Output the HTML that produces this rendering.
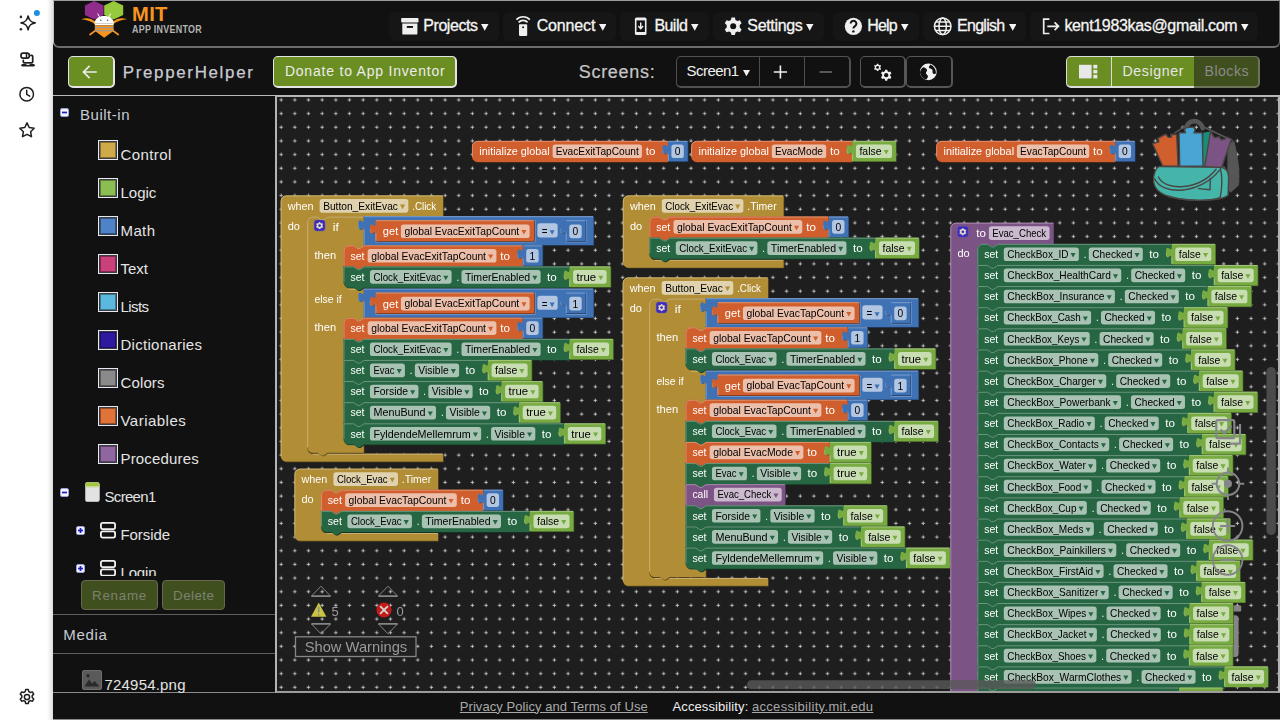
<!DOCTYPE html>
<html lang="en"><head><meta charset="utf-8"><title>MIT App Inventor</title>
<style>
*{box-sizing:border-box}
html,body{margin:0;padding:0}
body{width:1280px;height:720px;overflow:hidden;background:#111111;font-family:'Liberation Sans',sans-serif;position:relative}
.abs{position:absolute}
.t{position:absolute;white-space:pre;line-height:1;display:block}
#rail{position:absolute;left:0;top:0;width:53px;height:720px;background:linear-gradient(to right,#ffffff 0,#ffffff 47px,#f0f0f0 50px,#dedede 53px)}
#topbar{position:absolute;left:53px;top:0;width:1227px;height:48px;background:#111111;border:1px solid #6c6c6c;border-bottom-width:2px;border-top-color:#9a9a9a;border-left-color:#c4c4c4;border-radius:0 0 6px 6px}
.mi{position:absolute;top:11px;height:29px;background:#161616;border-radius:6px}
#toolbar{position:absolute;left:53px;top:48px;width:1227px;height:48px;background:#111111;border-bottom:1px solid #b9b9b9}
.btn{position:absolute;border-radius:4px}
#palette{position:absolute;left:53px;top:96px;width:222px;height:597px;background:#111111;overflow:hidden}
#tree{position:absolute;left:0;top:0;width:223px;height:480px;overflow:hidden}
.cat{position:absolute;left:45px;width:20px;height:20px;border:1px solid #e6e8f4;padding:1px;background:#3c3c3c}
.cat i{display:block;width:16px;height:16px;border:1px solid rgba(0,0,0,.35)}
#ws{position:absolute;left:275px;top:96px;width:1005px;height:597px;background:#1e1e1e;border:1px solid #b4b4b4;border-left-width:2px;border-right-width:2px;border-bottom:2px solid #9c9c9c;overflow:hidden}
#footer{position:absolute;left:53px;top:693px;width:1227px;height:27px;background:#111111;border-bottom:1px solid #8a8a8a}
</style></head>
<body>
<nav id="rail">
<svg class="abs" style="left:0;top:0" width="53" height="720" viewBox="0 0 53 720" fill="none" stroke="#1f1f1f" stroke-width="1.5" stroke-linejoin="round" stroke-linecap="round">
<path d="M28.1 16 C29 20.400 30.600 22 35.100 22.900 C30.600 23.800 29 25.400 28.100 29.800 C27.200 25.400 25.600 23.800 21.100 22.900 C25.600 22 27.200 20.400 28.100 16Z" stroke-width="1.600"/>
<circle cx="20.9" cy="16.9" r="1.300" fill="#2a2a2a" stroke="none"/><circle cx="20.9" cy="29.200" r="1.300" fill="#2a2a2a" stroke="none"/>
<circle cx="36.9" cy="13" r="3" fill="#1a8fe3" stroke="none"/>
<rect x="21" y="53.200" width="8.300" height="4.900" rx="2.200" stroke-width="1.700"/><path d="M26.500 53.500v4.300" stroke-width="1.500"/><path d="M23.300 60.300v1.500a1 1 0 0 0 1 1h7.400a1 1 0 0 0 1-1v-5.400a1 1 0 0 0-1-1h-.8" stroke-width="1.700"/><rect x="21.300" y="63.900" width="13.500" height="2.700" rx="1.300" fill="#1f1f1f" stroke="none"/><rect x="26.400" y="63.900" width="3.200" height="1" fill="#ffffff" stroke="none"/>
<circle cx="26.7" cy="94.2" r="6.8"/><path d="M26.7 90.2v4.2l3 1.8"/>
<path d="M27 122.9l2.2 4.6 5 .7-3.6 3.5.9 5-4.5-2.4-4.5 2.4.9-5-3.6-3.5 5-.7z"/>
<g transform="translate(27 697)"><circle r="2.6"/><path d="M-1.3 -7.4h2.6l.5 2 1.6.9 2-.6 1.3 2.2-1.5 1.5v1.9l1.5 1.5-1.3 2.2-2-.6-1.6.9-.5 2h-2.6l-.5-2-1.6-.9-2 .6-1.3-2.2 1.5-1.5v-1.9l-1.5-1.5 1.3-2.2 2 .6 1.6-.9z"/></g>
</svg>
</nav>
<header id="topbar">
<svg class="abs" style="left:26px;top:-1px" width="60" height="42" viewBox="80 0 60 42">
<polygon points="94.2,1 103.6,5.4 103.6,15 94.2,19.4 84.9,15 84.9,5.4" fill="#8f2c8c"/>
<polygon points="113.7,1 123.2,5.4 123.2,15 113.7,19.4 104.2,15 104.2,5.4" fill="#97c93d"/>
<path d="M81.2 19.3 C86 17.2 91 18.2 95.5 21.5 L95.5 24.5 C91 21 86 19.6 81.2 19.3Z" fill="#f7941e"/>
<path d="M127 19.3 C122.2 17.2 117.2 18.2 112.7 21.5 L112.7 24.5 C117.2 21 122.2 19.6 127 19.3Z" fill="#f7941e"/>
<path d="M95 31 L104.2 37.8 L113.4 31 L113.4 28 L95 28Z" fill="#f7941e"/>
<path d="M89.5 35 L95.5 30.5 M118.8 35 L112.8 30.5" stroke="#f7941e" stroke-width="1.6" fill="none"/>
<path d="M94.6 23.4 C94.6 18.6 98.8 16 104.2 16 C109.6 16 113.8 18.6 113.8 23.4Z" fill="#ffffff"/>
<path d="M99.5 16.8 L97.6 13.6 M108.9 16.8 L110.8 13.6" stroke="#ffffff" stroke-width="1" fill="none"/>
<circle cx="100.8" cy="20.2" r="0.8" fill="#555"/><circle cx="107.6" cy="20.2" r="0.8" fill="#555"/>
<rect x="94.8" y="23.4" width="18.8" height="2" fill="#ffffff"/>
<rect x="94.8" y="25.4" width="18.8" height="1.6" fill="#f7941e"/>
<rect x="94.8" y="27" width="18.8" height="1.5" fill="#9a9a9a"/>
<rect x="94.8" y="28.5" width="18.8" height="1.6" fill="#f7941e"/>
<rect x="94.8" y="30.1" width="18.8" height="1.2" fill="#9a9a9a"/>
</svg>
<div class="mi" style="left:335.3px;width:109.4px"></div>
<svg class="abs" style="left:427.40px;top:22.80px" width="7.50" height="6.80" viewBox="0 0 7.50 6.80"><path d="M0 0h7.50l-3.75 6.80z" fill="#f4f4f4"/></svg>
<div class="mi" style="left:449.0px;width:112.9px"></div>
<svg class="abs" style="left:544.80px;top:22.80px" width="7.50" height="6.80" viewBox="0 0 7.50 6.80"><path d="M0 0h7.50l-3.75 6.80z" fill="#f4f4f4"/></svg>
<div class="mi" style="left:565.8px;width:89.6px"></div>
<svg class="abs" style="left:637.20px;top:22.80px" width="7.50" height="6.80" viewBox="0 0 7.50 6.80"><path d="M0 0h7.50l-3.75 6.80z" fill="#f4f4f4"/></svg>
<div class="mi" style="left:659.3px;width:110.7px"></div>
<svg class="abs" style="left:752.20px;top:22.80px" width="7.50" height="6.80" viewBox="0 0 7.50 6.80"><path d="M0 0h7.50l-3.75 6.80z" fill="#f4f4f4"/></svg>
<div class="mi" style="left:778.8px;width:85.8px"></div>
<svg class="abs" style="left:847.00px;top:22.80px" width="7.50" height="6.80" viewBox="0 0 7.50 6.80"><path d="M0 0h7.50l-3.75 6.80z" fill="#f4f4f4"/></svg>
<div class="mi" style="left:868.6px;width:103.3px"></div>
<svg class="abs" style="left:954.50px;top:22.80px" width="7.50" height="6.80" viewBox="0 0 7.50 6.80"><path d="M0 0h7.50l-3.75 6.80z" fill="#f4f4f4"/></svg>
<div class="mi" style="left:975.9px;width:228.5px"></div>
<svg class="abs" style="left:1187.00px;top:22.80px" width="7.50" height="6.80" viewBox="0 0 7.50 6.80"><path d="M0 0h7.50l-3.75 6.80z" fill="#f4f4f4"/></svg>
<svg class="abs" style="left:336px;top:-1px" width="730" height="47" viewBox="390 0 730 47" fill="#efefef">
<g><rect x="401.2" y="18" width="17.3" height="4.6" rx="0.8"/><path d="M402.3 23.6h15.1v10.1a0.9 0.9 0 0 1-.9.9h-13.3a0.9 0.9 0 0 1-.9-.9z"/><rect x="406.8" y="26" width="6.2" height="1.9" fill="#111"/></g>
<g><rect x="519" y="24.200" width="8.200" height="11.700" rx="0.800"/><circle cx="523.100" cy="27.300" r="1" fill="#111"/><path d="M518.600 22.300a6.200 6.200 0 0 1 9 0M516.400 19.600a9.300 9.300 0 0 1 13.400 0" fill="none" stroke="#efefef" stroke-width="1.700"/></g>
<g><rect x="634.9" y="17.6" width="11.6" height="17.4" rx="1.6"/><rect x="636.5" y="20.4" width="8.4" height="11.6" fill="#111"/><path d="M640.7 22.6v5.4M638.3 26l2.4 2.6 2.4-2.6" fill="none" stroke="#efefef" stroke-width="1.4"/></g>
<g transform="translate(733.2 26.3)"><path d="M-1.7 -8.8h3.4l.6 2.5 1.9 1.1 2.5-.8 1.7 2.9-1.9 1.8v2.6l1.9 1.8-1.7 2.9-2.5-.8-1.9 1.100-.6 2.5h-3.4l-.6-2.5-1.9-1.100-2.5.8-1.700-2.900 1.900-1.800v-2.600l-1.900-1.800 1.700-2.900 2.500.8 1.900-1.100z"/><circle r="3" fill="#111"/></g>
<g><circle cx="853.4" cy="26.3" r="8.6"/><path d="M850.6 23.6a2.9 2.9 0 1 1 4.400 2.500c-1.100.7-1.600 1.200-1.600 2.400" fill="none" stroke="#111" stroke-width="2"/><circle cx="853.4" cy="31.400" r="1.2" fill="#111"/></g>
<g fill="none" stroke="#efefef" stroke-width="1.5"><circle cx="942.7" cy="26.3" r="8.300"/><ellipse cx="942.7" cy="26.3" rx="3.700" ry="8.300"/><path d="M934.400 26.3h16.600M935.600 22.100h14.200M935.600 30.500h14.200"/></g>
<g fill="none" stroke="#efefef" stroke-width="1.700"><path d="M1049.400 19.200h-5.700v14.300h5.700"/><path d="M1047.300 26.300h11M1054.600 22.400l3.900 3.900-3.900 3.900"/></g>
</svg>
<span class="t" style="left:78.10px;top:2.60px;font-size:20.2px;color:#f7941e;font-weight:700;letter-spacing:0.267px;">MIT</span>
<span class="t" style="left:78.10px;top:23.43px;font-size:10.6px;color:#b4b4b4;font-weight:700;letter-spacing:0.342px;transform:scaleX(0.84);transform-origin:0 0;">APP INVENTOR</span>
<span class="t" style="left:369.30px;top:16.56px;font-size:16px;color:#f4f4f4;letter-spacing:-0.442px;-webkit-text-stroke:.3px #f4f4f4;">Projects</span>
<span class="t" style="left:482.70px;top:16.56px;font-size:16px;color:#f4f4f4;letter-spacing:-0.149px;-webkit-text-stroke:.3px #f4f4f4;">Connect</span>
<span class="t" style="left:600.40px;top:16.56px;font-size:16px;color:#f4f4f4;letter-spacing:-0.545px;-webkit-text-stroke:.3px #f4f4f4;">Build</span>
<span class="t" style="left:693.30px;top:16.56px;font-size:16px;color:#f4f4f4;letter-spacing:-0.330px;-webkit-text-stroke:.3px #f4f4f4;">Settings</span>
<span class="t" style="left:813.30px;top:16.56px;font-size:16px;color:#f4f4f4;letter-spacing:-0.869px;-webkit-text-stroke:.3px #f4f4f4;">Help</span>
<span class="t" style="left:903.10px;top:16.56px;font-size:16px;color:#f4f4f4;letter-spacing:-0.747px;-webkit-text-stroke:.3px #f4f4f4;">English</span>
<span class="t" style="left:1010.40px;top:16.56px;font-size:16px;color:#f4f4f4;letter-spacing:-0.335px;-webkit-text-stroke:.3px #f4f4f4;">kent1983kas@gmail.com</span>
</header>
<div id="toolbar">
<div class="btn" style="left:15.0px;top:8.0px;width:47.4px;height:32.4px;background:#6b8e23;border:1px solid #e4e4e4;border-width:1px 2px 2px 1px;border-radius:5px"></div>
<svg class="abs" style="left:28px;top:16px" width="20" height="16" viewBox="81 64 20 16" fill="none" stroke="#ececec" stroke-width="1.700"><path d="M96.800 72h-13M89.600 65.800l-6.100 6.200 6.100 6.200"/></svg>
<div class="btn" style="left:220.0px;top:8.4px;width:184.0px;height:31.4px;background:#6b8e23;border:1px solid #e4e4e4;border-width:1px 2px 2px 1px;border-radius:5px"></div>
<div class="btn" style="left:622.6px;top:8.4px;width:175.0px;height:31.2px;border:1px solid #505050;border-width:1px 2px 2px 1px;border-radius:5px"></div>
<div class="btn" style="left:706.0px;top:8.4px;width:1.0px;height:30.6px;background:#4d4d4d;border-radius:0"></div>
<div class="btn" style="left:751.0px;top:8.4px;width:1.0px;height:30.6px;background:#4d4d4d;border-radius:0"></div>
<svg class="abs" style="left:689.70px;top:22.20px" width="7.00" height="6.30" viewBox="0 0 7.00 6.30"><path d="M0 0h7.00l-3.50 6.30z" fill="#f0f0f0"/></svg>
<svg class="abs" style="left:712px;top:12px" width="80" height="24" viewBox="765 60 80 24" fill="none"><path d="M773.800 72h13.200M780.400 65.400v13.200" stroke="#f0f0f0" stroke-width="1.600"/><path d="M819.500 72h12.500" stroke="#6a6a6a" stroke-width="1.600"/></svg>
<div class="btn" style="left:807.0px;top:8.4px;width:46.4px;height:31.4px;border:1px solid #565656;border-width:1px 2px 2px 1px;border-radius:5px"></div>
<div class="btn" style="left:852.6px;top:8.4px;width:47.4px;height:31.4px;border:1px solid #565656;border-width:1px 2px 2px 1px;border-radius:5px"></div>
<svg class="abs" style="left:815px;top:12px" width="76" height="24" viewBox="868 60 76 24" fill="#f0f0f0">
<g transform="translate(886.200 75.200) scale(0.62)"><path d="M-1.7 -8.8h3.4l.6 2.5 1.9 1.1 2.5-.8 1.7 2.9-1.9 1.8v2.6l1.9 1.8-1.7 2.9-2.5-.8-1.9 1.100-.6 2.5h-3.4l-.6-2.5-1.9-1.100-2.5.8-1.700-2.900 1.900-1.800v-2.600l-1.900-1.800 1.700-2.900 2.500.8 1.900-1.100z"/><circle r="3.400" fill="#111"/></g>
<g transform="translate(877.600 67.400) scale(0.42)"><path d="M-1.7 -8.8h3.4l.6 2.5 1.9 1.1 2.5-.8 1.7 2.9-1.9 1.8v2.6l1.9 1.8-1.7 2.9-2.5-.8-1.9 1.100-.6 2.5h-3.4l-.6-2.5-1.9-1.100-2.5.8-1.700-2.900 1.900-1.800v-2.600l-1.900-1.800 1.700-2.900 2.500.8 1.900-1.100z"/><circle r="3.400" fill="#111"/></g>
<circle cx="928.300" cy="71.900" r="8.400"/>
<path d="M923.200 67.200c1.800.3 3.400 1.200 3.800 2.600.5 1.500-1.300 2.100-1.100 3.500.2 1.300 2 1.500 2 3 0 1.300-.8 2.400-1.600 3.300-3.300-.7-5.800-3.400-6.300-6.800 0-2.200 1.300-4.300 3.200-5.600z" fill="#111"/>
<path d="M930.400 64.600c-.4 1.300-1.700 1.700-1.500 2.900.3 1.300 2.400 1 3.300 2.100.9 1.200-.2 2.800.8 3.800.8.800 2 .6 2.900.2.400-3.600-1.900-7.300-5.500-9z" fill="#111"/>
</svg>
<div class="btn" style="left:1013.2px;top:7.9px;width:45.5px;height:31.9px;background:#6b8e23;border:1px solid #dcdcdc;border-bottom-width:2px;border-radius:5px 0 0 5px"></div>
<div class="btn" style="left:1057.8px;top:7.9px;width:84.5px;height:31.9px;background:#6b8e23;border:1px solid #dcdcdc;border-bottom-width:2px;border-radius:0"></div>
<div class="btn" style="left:1141.2px;top:7.9px;width:65.8px;height:31.7px;background:#3f4f1e;border:1px solid #6c7359;border-left:0;border-width:1px 2px 2px 0;border-radius:0 5px 5px 0"></div>
<svg class="abs" style="left:1023px;top:14px" width="24" height="20" viewBox="1076 62 24 20" fill="#e8e8e8"><rect x="1079" y="64.800" width="12.600" height="13.600"/><rect x="1093.300" y="64.800" width="4" height="3.600"/><rect x="1093.300" y="69.800" width="4" height="3.600"/><rect x="1093.300" y="74.800" width="4" height="3.600"/></svg>
<span class="t" style="left:69.70px;top:16.89px;font-size:16.9px;color:#c9cbd2;letter-spacing:1.695px;-webkit-text-stroke:.25px #c9cbd2;">PrepperHelper</span>
<span class="t" style="left:231.90px;top:16.25px;font-size:14px;color:#ececec;letter-spacing:0.790px;">Donate to App Inventor</span>
<span class="t" style="left:525.75px;top:15.06px;font-size:18px;color:#c6c6c6;letter-spacing:0.693px;-webkit-text-stroke:.2px #c6c6c6;">Screens:</span>
<span class="t" style="left:633.60px;top:15.00px;font-size:15px;color:#f0f0f0;letter-spacing:-0.546px;">Screen1</span>
<span class="t" style="left:1069.50px;top:15.88px;font-size:14.2px;color:#e6e6e6;letter-spacing:0.588px;">Designer</span>
<span class="t" style="left:1151.60px;top:15.88px;font-size:14.2px;color:#8a8a8a;letter-spacing:0.421px;">Blocks</span>
</div>
<aside id="palette">
<div id="tree">
<svg class="abs" style="left:7px;top:12px" width="9" height="9" viewBox="0 0 9 9"><rect x="0.500" y="0.500" width="8" height="8" rx="1.500" fill="#f4f4fb" stroke="#9aa0d8"/><path d="M2 4.500h5" stroke="#1c1cc8" stroke-width="1.700"/></svg>
<div class="cat" style="top:44px"><i style="background:#cfaa4b"></i></div>
<div class="cat" style="top:82px"><i style="background:#8bbd52"></i></div>
<div class="cat" style="top:120px"><i style="background:#4f83c8"></i></div>
<div class="cat" style="top:158px"><i style="background:#c9407a"></i></div>
<div class="cat" style="top:196px"><i style="background:#5bb9e0"></i></div>
<div class="cat" style="top:234px"><i style="background:#2e1a9e"></i></div>
<div class="cat" style="top:272px"><i style="background:#8a8a8a"></i></div>
<div class="cat" style="top:310px"><i style="background:#e0733a"></i></div>
<div class="cat" style="top:348px"><i style="background:#8f66a0"></i></div>
<svg class="abs" style="left:7px;top:392px" width="9" height="9" viewBox="0 0 9 9"><rect x="0.500" y="0.500" width="8" height="8" rx="1.500" fill="#f4f4fb" stroke="#9aa0d8"/><path d="M2 4.500h5" stroke="#1c1cc8" stroke-width="1.700"/></svg>
<svg class="abs" style="left:31.5px;top:386px" width="15" height="20" viewBox="0 0 15 20"><rect x="0.300" y="0.300" width="14.200" height="19.400" rx="2.200" fill="#e2e2e2" stroke="#c4c4c4" stroke-width=".6"/><path d="M0.600 2.500a2 2 0 0 1 2-2h9.600a2 2 0 0 1 2 2v1.700h-13.600z" fill="#a4c639"/><rect x="0.600" y="4.200" width="13.600" height="1.200" fill="#c5d88a"/></svg>
<svg class="abs" style="left:23.25px;top:430px" width="9" height="9" viewBox="0 0 9 9"><rect x="0.500" y="0.500" width="8" height="8" rx="1.500" fill="#f4f4fb" stroke="#9aa0d8"/><path d="M2 4.500h5" stroke="#1c1cc8" stroke-width="1.700"/><path d="M4.500 2v5" stroke="#1c1cc8" stroke-width="1.700"/></svg>
<svg class="abs" style="left:47.3px;top:426.20000000000005px" width="16" height="17" viewBox="0 0 16 17" fill="none" stroke="#f2f2f2" stroke-width="1.800"><rect x="0.900" y="0.900" width="14.200" height="6.200" rx="1.800"/><rect x="0.900" y="9.400" width="14.200" height="6.200" rx="1.800"/></svg>
<svg class="abs" style="left:23.25px;top:467.6px" width="9" height="9" viewBox="0 0 9 9"><rect x="0.500" y="0.500" width="8" height="8" rx="1.500" fill="#f4f4fb" stroke="#9aa0d8"/><path d="M2 4.500h5" stroke="#1c1cc8" stroke-width="1.700"/><path d="M4.500 2v5" stroke="#1c1cc8" stroke-width="1.700"/></svg>
<svg class="abs" style="left:47.3px;top:464.4px" width="16" height="17" viewBox="0 0 16 17" fill="none" stroke="#f2f2f2" stroke-width="1.800"><rect x="0.900" y="0.900" width="14.200" height="6.200" rx="1.800"/><rect x="0.900" y="9.400" width="14.200" height="6.200" rx="1.800"/></svg>
<span class="t" style="left:27.00px;top:11.30px;font-size:15px;color:#c9cbd2;letter-spacing:0.520px;">Built-in</span>
<span class="t" style="left:67.50px;top:51.30px;font-size:15px;color:#e4e4e4;letter-spacing:0.398px;">Control</span>
<span class="t" style="left:67.50px;top:89.30px;font-size:15px;color:#e4e4e4;letter-spacing:-0.027px;">Logic</span>
<span class="t" style="left:67.50px;top:127.30px;font-size:15px;color:#e4e4e4;letter-spacing:0.380px;">Math</span>
<span class="t" style="left:67.50px;top:165.30px;font-size:15px;color:#e4e4e4;letter-spacing:-0.005px;">Text</span>
<span class="t" style="left:67.50px;top:203.30px;font-size:15px;color:#e4e4e4;letter-spacing:-0.586px;">Lists</span>
<span class="t" style="left:67.50px;top:241.30px;font-size:15px;color:#e4e4e4;letter-spacing:0.284px;">Dictionaries</span>
<span class="t" style="left:67.50px;top:279.30px;font-size:15px;color:#e4e4e4;letter-spacing:0.128px;">Colors</span>
<span class="t" style="left:67.50px;top:317.30px;font-size:15px;color:#e4e4e4;letter-spacing:0.479px;">Variables</span>
<span class="t" style="left:67.50px;top:355.30px;font-size:15px;color:#e4e4e4;letter-spacing:0.170px;">Procedures</span>
<span class="t" style="left:51.50px;top:393.30px;font-size:15px;color:#e4e4e4;letter-spacing:-0.688px;">Screen1</span>
<span class="t" style="left:67.50px;top:431.30px;font-size:15px;color:#e4e4e4;letter-spacing:-0.089px;">Forside</span>
<span class="t" style="left:67.50px;top:469.30px;font-size:15px;color:#e4e4e4;letter-spacing:-0.176px;">Login</span>
</div>
<div class="btn" style="left:28.2px;top:484.0px;width:76.8px;height:29.5px;background:#3f4f1e;border:1px solid #66694f;border-radius:4px"></div>
<div class="btn" style="left:109.0px;top:484.0px;width:63.0px;height:29.5px;background:#3f4f1e;border:1px solid #66694f;border-radius:4px"></div>
<div class="abs" style="left:0;top:518px;width:223px;height:1px;background:#5f5f5f"></div>
<div class="abs" style="left:0;top:557px;width:223px;height:1px;background:#5f5f5f"></div>
<svg class="abs" style="left:29px;top:574px" width="20" height="20" viewBox="0 0 20 20"><rect x="0.500" y="0.500" width="19" height="19" rx="1.500" fill="#5a5a5a" stroke="#6e6e6e"/><path d="M2.500 16.500l4.500-7 3.200 4.200 2.300-2.700 5 5.500z" fill="#2a2a2a"/><circle cx="6" cy="5.800" r="1.700" fill="#2a2a2a"/></svg>
<div class="abs" style="left:0;top:596px;width:223px;height:1px;background:#8a8a8a"></div>
<span class="t" style="left:39.00px;top:492.66px;font-size:13.4px;color:#7d8270;letter-spacing:0.725px;">Rename</span>
<span class="t" style="left:120.00px;top:492.66px;font-size:13.4px;color:#7d8270;letter-spacing:0.456px;">Delete</span>
<span class="t" style="left:10.25px;top:531.30px;font-size:15px;color:#c9cbd2;letter-spacing:0.660px;">Media</span>
<span class="t" style="left:51.50px;top:581.30px;font-size:15px;color:#e4e4e4;letter-spacing:0.194px;">724954.png</span>
</aside>
<main id="ws">
<svg class="abs" style="left:0;top:0;will-change:transform" width="1001" height="595" viewBox="277 97 1001 595" font-family="'Liberation Sans', sans-serif" font-size="10.02">
<defs><pattern id="grid" x="273.99" y="92.73" width="13.66" height="13.66" patternUnits="userSpaceOnUse"><line x1="5.422" y1="7.172" x2="8.922" y2="7.172" stroke="#d4d4d4" stroke-width="0.85"/><line x1="7.172" y1="5.422" x2="7.172" y2="8.922" stroke="#d4d4d4" stroke-width="0.85"/></pattern></defs>
<rect x="277" y="97" width="1001" height="595" fill="url(#grid)"/>
<g fill="#858585"><rect x="1211" y="615.200" width="27.600" height="41.800" rx="3.500"/><rect x="1208" y="605.400" width="33.200" height="6" rx="1"/></g>
<path d="M477.50 140.90H667.99V161.90H477.50a5.5,5.5 0 0 1 -5.5,-5.5V146.40a5.5,5.5 0 0 1 5.5,-5.5z" fill="#723419" transform="translate(0.7 0.7)"/>
<path d="M477.50 140.90H667.99V161.90H477.50a5.5,5.5 0 0 1 -5.5,-5.5V146.40a5.5,5.5 0 0 1 5.5,-5.5z" fill="#d05f2d"/>
<path d="M667.59 141.30H477.50a5.1,5.1 0 0 0 -5.1,5.1V156.40" stroke="#df9270" stroke-width="1" fill="none"/>
<text x="479.30" y="155.10" fill="#ffffff" textLength="70.48" lengthAdjust="spacingAndGlyphs">initialize global</text>
<rect x="552.60" y="144.40" width="89.39" height="13.7" rx="2.7" fill="#ecbfab"/>
<text x="555.75" y="155.10" fill="#000000" textLength="83.09" lengthAdjust="spacingAndGlyphs">EvacExitTapCount</text>
<text x="645.79" y="155.10" fill="#ffffff" textLength="9.69" lengthAdjust="spacingAndGlyphs">to</text>
<path d="M667.99 140.90H687.73V161.30H667.99V154.50c0,-6.83 -5.46,5.46 -5.46,-5.12s5.46,1.71 5.46,-5.12v-3.4z" fill="#233e64" transform="translate(0.7 0.7)"/>
<path d="M667.99 140.90H687.73V161.30H667.99V154.50c0,-6.83 -5.46,5.46 -5.46,-5.12s5.46,1.71 5.46,-5.12v-3.4z" fill="#3f71b5"/>
<path d="M687.33 141.30H668.39" stroke="#7c9ecd" stroke-width="1" fill="none"/>
<path d="M668.39 154.50V160.90" stroke="#7c9ecd" stroke-width="1" fill="none"/>
<path d="M668.19 154.50c0,-6.83 -5.46,5.46 -5.46,-5.12" stroke="#7c9ecd" stroke-width="0.7" fill="none" opacity=".8"/>
<rect x="671.39" y="144.40" width="12.43" height="13.7" rx="2.7" fill="#b2c6e1"/>
<text x="674.74" y="155.10" fill="#000000" textLength="5.73" lengthAdjust="spacingAndGlyphs">0</text>
<path d="M696.70 140.90H852.15V161.90H696.70a5.5,5.5 0 0 1 -5.5,-5.5V146.40a5.5,5.5 0 0 1 5.5,-5.5z" fill="#723419" transform="translate(0.7 0.7)"/>
<path d="M696.70 140.90H852.15V161.90H696.70a5.5,5.5 0 0 1 -5.5,-5.5V146.40a5.5,5.5 0 0 1 5.5,-5.5z" fill="#d05f2d"/>
<path d="M851.75 141.30H696.70a5.1,5.1 0 0 0 -5.1,5.1V156.40" stroke="#df9270" stroke-width="1" fill="none"/>
<text x="698.50" y="155.10" fill="#ffffff" textLength="70.48" lengthAdjust="spacingAndGlyphs">initialize global</text>
<rect x="771.80" y="144.40" width="54.35" height="13.7" rx="2.7" fill="#ecbfab"/>
<text x="774.95" y="155.10" fill="#000000" textLength="48.05" lengthAdjust="spacingAndGlyphs">EvacMode</text>
<text x="829.95" y="155.10" fill="#ffffff" textLength="9.69" lengthAdjust="spacingAndGlyphs">to</text>
<path d="M852.15 140.90H895.96V161.30H852.15V154.50c0,-6.83 -5.46,5.46 -5.46,-5.12s5.46,1.71 5.46,-5.12v-3.4z" fill="#415e24" transform="translate(0.7 0.7)"/>
<path d="M852.15 140.90H895.96V161.30H852.15V154.50c0,-6.83 -5.46,5.46 -5.46,-5.12s5.46,1.71 5.46,-5.12v-3.4z" fill="#77ab41"/>
<path d="M895.56 141.30H852.55" stroke="#a3c67e" stroke-width="1" fill="none"/>
<path d="M852.55 154.50V160.90" stroke="#a3c67e" stroke-width="1" fill="none"/>
<path d="M852.35 154.50c0,-6.83 -5.46,5.46 -5.46,-5.12" stroke="#a3c67e" stroke-width="0.7" fill="none" opacity=".8"/>
<rect x="855.95" y="144.40" width="36.01" height="13.7" rx="2.7" fill="#c9ddb3"/>
<text x="859.45" y="155.10" fill="#000000" textLength="22.11" lengthAdjust="spacingAndGlyphs">false</text>
<path d="M883.66 150.00h5.1l-2.55 4.6z" fill="#77ab41"/>
<path d="M941.80 140.90H1115.22V161.90H941.80a5.5,5.5 0 0 1 -5.5,-5.5V146.40a5.5,5.5 0 0 1 5.5,-5.5z" fill="#723419" transform="translate(0.7 0.7)"/>
<path d="M941.80 140.90H1115.22V161.90H941.80a5.5,5.5 0 0 1 -5.5,-5.5V146.40a5.5,5.5 0 0 1 5.5,-5.5z" fill="#d05f2d"/>
<path d="M1114.82 141.30H941.80a5.1,5.1 0 0 0 -5.1,5.1V156.40" stroke="#df9270" stroke-width="1" fill="none"/>
<text x="943.60" y="155.10" fill="#ffffff" textLength="70.48" lengthAdjust="spacingAndGlyphs">initialize global</text>
<rect x="1016.90" y="144.40" width="72.32" height="13.7" rx="2.7" fill="#ecbfab"/>
<text x="1020.05" y="155.10" fill="#000000" textLength="66.02" lengthAdjust="spacingAndGlyphs">EvacTapCount</text>
<text x="1093.02" y="155.10" fill="#ffffff" textLength="9.69" lengthAdjust="spacingAndGlyphs">to</text>
<path d="M1115.22 140.90H1134.95V161.30H1115.22V154.50c0,-6.83 -5.46,5.46 -5.46,-5.12s5.46,1.71 5.46,-5.12v-3.4z" fill="#233e64" transform="translate(0.7 0.7)"/>
<path d="M1115.22 140.90H1134.95V161.30H1115.22V154.50c0,-6.83 -5.46,5.46 -5.46,-5.12s5.46,1.71 5.46,-5.12v-3.4z" fill="#3f71b5"/>
<path d="M1134.55 141.30H1115.62" stroke="#7c9ecd" stroke-width="1" fill="none"/>
<path d="M1115.62 154.50V160.90" stroke="#7c9ecd" stroke-width="1" fill="none"/>
<path d="M1115.42 154.50c0,-6.83 -5.46,5.46 -5.46,-5.12" stroke="#7c9ecd" stroke-width="0.7" fill="none" opacity=".8"/>
<rect x="1118.62" y="144.40" width="12.43" height="13.7" rx="2.7" fill="#b2c6e1"/>
<text x="1121.97" y="155.10" fill="#000000" textLength="5.73" lengthAdjust="spacingAndGlyphs">0</text>
<path d="M280.75 201.00a5.5,5.5 0 0 1 5.5,-5.5H443.00V216.60H327.65l-4.1,2.7 -2,0 -4.1,-2.7H312.75a5.5,5.5 0 0 0 -5.5,5.5V448.24a5.5,5.5 0 0 0 5.5,5.5H443.00V461.54H286.25a5.5,5.5 0 0 1 -5.5,-5.5z" fill="#614e1d" transform="translate(0.7 0.7)"/>
<path d="M280.75 201.00a5.5,5.5 0 0 1 5.5,-5.5H443.00V216.60H327.65l-4.1,2.7 -2,0 -4.1,-2.7H312.75a5.5,5.5 0 0 0 -5.5,5.5V448.24a5.5,5.5 0 0 0 5.5,5.5H443.00V461.54H286.25a5.5,5.5 0 0 1 -5.5,-5.5z" fill="#b18e35"/>
<path d="M442.60 195.90H286.25a5.1,5.1 0 0 0 -5.1,5.1V456.04" stroke="#cab276" stroke-width="1" fill="none"/>
<path d="M442.60 454.14H312.75" stroke="#cab276" stroke-width="1" fill="none"/>
<path d="M312.75 453.34a5.5,5.5 0 0 1 -5.1,-5.1V222.10" stroke="#614e1d" stroke-width="0.8" fill="none" opacity=".6"/>
<text x="287.75" y="209.70" fill="#ffffff" textLength="25.91" lengthAdjust="spacingAndGlyphs">when</text>
<rect x="319.65" y="199.00" width="88.68" height="13.7" rx="2.7" fill="#e0d2ae"/>
<text x="323.15" y="209.70" fill="#000000" textLength="74.78" lengthAdjust="spacingAndGlyphs">Button_ExitEvac</text>
<path d="M400.03 204.60h5.1l-2.55 4.6z" fill="#b18e35"/>
<text x="412.23" y="209.70" fill="#ffffff" textLength="23.84" lengthAdjust="spacingAndGlyphs">.Click</text>
<text x="287.75" y="230.10" fill="#ffffff" textLength="12.23" lengthAdjust="spacingAndGlyphs">do</text>
<path d="M307.25 222.10a5.5,5.5 0 0 1 5.5,-5.5H317.45l4.1,2.7 2,0 4.1,-2.7H363.75V245.40H363.95l-4.1,2.7 -2,0 -4.1,-2.7H349.05a5.5,5.5 0 0 0 -5.5,5.5V282.16a5.5,5.5 0 0 0 5.5,5.5H363.75V317.76H363.95l-4.1,2.7 -2,0 -4.1,-2.7H349.05a5.5,5.5 0 0 0 -5.5,5.5V439.04a5.5,5.5 0 0 0 5.5,5.5H363.75V452.74H327.65l-4.1,2.7 -2,0 -4.1,-2.7H312.75a5.5,5.5 0 0 1 -5.5,-5.5z" fill="#614e1d" transform="translate(0.7 0.7)"/>
<path d="M307.25 222.10a5.5,5.5 0 0 1 5.5,-5.5H317.45l4.1,2.7 2,0 4.1,-2.7H363.75V245.40H363.95l-4.1,2.7 -2,0 -4.1,-2.7H349.05a5.5,5.5 0 0 0 -5.5,5.5V282.16a5.5,5.5 0 0 0 5.5,5.5H363.75V317.76H363.95l-4.1,2.7 -2,0 -4.1,-2.7H349.05a5.5,5.5 0 0 0 -5.5,5.5V439.04a5.5,5.5 0 0 0 5.5,5.5H363.75V452.74H327.65l-4.1,2.7 -2,0 -4.1,-2.7H312.75a5.5,5.5 0 0 1 -5.5,-5.5z" fill="#b18e35"/>
<path d="M363.35 217.00H327.65l-4.1,2.7 -2,0 -4.1,-2.7H312.75a5.1,5.1 0 0 0 -5.1,5.1V447.24" stroke="#cab276" stroke-width="1" fill="none"/>
<path d="M349.05 287.26a5.5,5.5 0 0 1 -5.1,-5.1V250.90" stroke="#614e1d" stroke-width="0.8" fill="none" opacity=".6"/>
<path d="M363.35 289.36H349.05" stroke="#cab276" stroke-width="1" fill="none"/>
<path d="M349.05 444.14a5.5,5.5 0 0 1 -5.1,-5.1V323.26" stroke="#614e1d" stroke-width="0.8" fill="none" opacity=".6"/>
<path d="M363.35 444.94H349.05" stroke="#cab276" stroke-width="1" fill="none"/>
<rect x="314.15" y="220.10" width="10.9" height="10.9" rx="2.4" fill="#3b2db8" stroke="#6a5cc0" stroke-width="0.4"/>
<polygon points="319.60,222.05 320.87,223.39 322.67,223.82 322.15,225.60 322.67,227.38 320.87,227.81 319.60,229.15 318.32,227.81 316.53,227.38 317.05,225.60 316.53,223.82 318.32,223.39" fill="#eadfc8" stroke="#eadfc8" stroke-width="0.5" stroke-linejoin="round"/>
<circle cx="319.60" cy="225.60" r="1.35" fill="#3b2db8"/>
<text x="332.85" y="231.00" fill="#ffffff" textLength="6.03" lengthAdjust="spacingAndGlyphs">if</text>
<text x="314.45" y="258.90" fill="#ffffff" textLength="21.66" lengthAdjust="spacingAndGlyphs">then</text>
<path d="M363.75 216.30H593.49V245.05H363.75V229.90c0,-6.83 -5.46,5.46 -5.46,-5.12s5.46,1.71 5.46,-5.12v-3.4z" fill="#233e64" transform="translate(0.7 0.7)"/>
<path d="M363.75 216.30H593.49V245.05H363.75V229.90c0,-6.83 -5.46,5.46 -5.46,-5.12s5.46,1.71 5.46,-5.12v-3.4z" fill="#3f71b5"/>
<path d="M593.09 216.70H364.15" stroke="#7c9ecd" stroke-width="1" fill="none"/>
<path d="M364.15 229.90V244.65" stroke="#7c9ecd" stroke-width="1" fill="none"/>
<path d="M363.95 229.90c0,-6.83 -5.46,5.46 -5.46,-5.12" stroke="#7c9ecd" stroke-width="0.7" fill="none" opacity=".8"/>
<path d="M535.06 220.30V241.90H375.50" stroke="#7c9ecd" stroke-width="1" fill="none"/>
<path d="M586.59 220.30V241.90H565.86" stroke="#7c9ecd" stroke-width="1" fill="none"/>
<path d="M375.50 220.30H534.06V241.00H375.50V233.90c0,-6.83 -5.46,5.46 -5.46,-5.12s5.46,1.71 5.46,-5.12v-3.4z" fill="#723419" transform="translate(0.7 0.7)"/>
<path d="M375.50 220.30H534.06V241.00H375.50V233.90c0,-6.83 -5.46,5.46 -5.46,-5.12s5.46,1.71 5.46,-5.12v-3.4z" fill="#d05f2d"/>
<path d="M533.66 220.70H375.90" stroke="#df9270" stroke-width="1" fill="none"/>
<path d="M375.90 233.90V240.60" stroke="#df9270" stroke-width="1" fill="none"/>
<path d="M375.70 233.90c0,-6.83 -5.46,5.46 -5.46,-5.12" stroke="#df9270" stroke-width="0.7" fill="none" opacity=".8"/>
<text x="382.80" y="235.20" fill="#ffffff" textLength="15.44" lengthAdjust="spacingAndGlyphs">get</text>
<rect x="400.90" y="224.40" width="128.76" height="13.7" rx="2.7" fill="#ecbfab"/>
<text x="404.40" y="235.10" fill="#000000" textLength="114.86" lengthAdjust="spacingAndGlyphs">global EvacExitTapCount</text>
<path d="M521.36 230.00h5.1l-2.55 4.6z" fill="#d05f2d"/>
<rect x="537.36" y="223.30" width="20.3" height="14.2" rx="2.7" fill="#b2c6e1"/>
<text x="541.66" y="235.20" fill="#000000" textLength="5.73" lengthAdjust="spacingAndGlyphs">=</text>
<path d="M549.59 230.20h5.1l-2.55 4.6z" fill="#3f71b5"/>
<path d="M565.86 220.30H585.59V241.00H565.86V233.90c0,-6.83 -5.46,5.46 -5.46,-5.12s5.46,1.71 5.46,-5.12v-3.4z" fill="#233e64" transform="translate(0.7 0.7)"/>
<path d="M565.86 220.30H585.59V241.00H565.86V233.90c0,-6.83 -5.46,5.46 -5.46,-5.12s5.46,1.71 5.46,-5.12v-3.4z" fill="#3f71b5"/>
<path d="M585.19 220.70H566.26" stroke="#7c9ecd" stroke-width="1" fill="none"/>
<path d="M566.26 233.90V240.60" stroke="#7c9ecd" stroke-width="1" fill="none"/>
<path d="M566.06 233.90c0,-6.83 -5.46,5.46 -5.46,-5.12" stroke="#7c9ecd" stroke-width="0.7" fill="none" opacity=".8"/>
<rect x="569.26" y="224.50" width="12.43" height="13.7" rx="2.7" fill="#b2c6e1"/>
<text x="572.61" y="235.20" fill="#000000" textLength="5.73" lengthAdjust="spacingAndGlyphs">0</text>
<path d="M343.55 250.90a5.5,5.5 0 0 1 5.5,-5.5H353.75l4.1,2.7 2,0 4.1,-2.7H522.81V266.53H363.95l-4.1,2.7 -2,0 -4.1,-2.7H343.55z" fill="#723419" transform="translate(0.7 0.7)"/>
<path d="M343.55 250.90a5.5,5.5 0 0 1 5.5,-5.5H353.75l4.1,2.7 2,0 4.1,-2.7H522.81V266.53H363.95l-4.1,2.7 -2,0 -4.1,-2.7H343.55z" fill="#d05f2d"/>
<path d="M522.41 245.80H363.95l-4.1,2.7 -2,0 -4.1,-2.7H349.05a5.1,5.1 0 0 0 -5.1,5.1V266.13" stroke="#df9270" stroke-width="1" fill="none"/>
<text x="350.40" y="259.60" fill="#ffffff" textLength="14.06" lengthAdjust="spacingAndGlyphs">set</text>
<rect x="367.65" y="248.90" width="128.76" height="13.7" rx="2.7" fill="#ecbfab"/>
<text x="371.15" y="259.60" fill="#000000" textLength="114.86" lengthAdjust="spacingAndGlyphs">global EvacExitTapCount</text>
<path d="M488.11 254.50h5.1l-2.55 4.6z" fill="#d05f2d"/>
<text x="500.31" y="259.60" fill="#ffffff" textLength="9.69" lengthAdjust="spacingAndGlyphs">to</text>
<path d="M522.81 245.40H542.54V265.80H522.81V259.00c0,-6.83 -5.46,5.46 -5.46,-5.12s5.46,1.71 5.46,-5.12v-3.4z" fill="#233e64" transform="translate(0.7 0.7)"/>
<path d="M522.81 245.40H542.54V265.80H522.81V259.00c0,-6.83 -5.46,5.46 -5.46,-5.12s5.46,1.71 5.46,-5.12v-3.4z" fill="#3f71b5"/>
<path d="M542.14 245.80H523.21" stroke="#7c9ecd" stroke-width="1" fill="none"/>
<path d="M523.21 259.00V265.40" stroke="#7c9ecd" stroke-width="1" fill="none"/>
<path d="M523.01 259.00c0,-6.83 -5.46,5.46 -5.46,-5.12" stroke="#7c9ecd" stroke-width="0.7" fill="none" opacity=".8"/>
<rect x="526.21" y="248.90" width="12.43" height="13.7" rx="2.7" fill="#b2c6e1"/>
<text x="529.56" y="259.60" fill="#000000" textLength="5.73" lengthAdjust="spacingAndGlyphs">1</text>
<path d="M343.55 266.53H353.75l4.1,2.7 2,0 4.1,-2.7H569.32V287.66H363.95l-4.1,2.7 -2,0 -4.1,-2.7H349.05a5.5,5.5 0 0 1 -5.5,-5.5z" fill="#153825" transform="translate(0.7 0.7)"/>
<path d="M343.55 266.53H353.75l4.1,2.7 2,0 4.1,-2.7H569.32V287.66H363.95l-4.1,2.7 -2,0 -4.1,-2.7H349.05a5.5,5.5 0 0 1 -5.5,-5.5z" fill="#266643"/>
<path d="M568.92 266.93H363.95l-4.1,2.7 -2,0 -4.1,-2.7H343.95V282.16" stroke="#6b977f" stroke-width="1" fill="none"/>
<text x="350.40" y="280.73" fill="#ffffff" textLength="14.06" lengthAdjust="spacingAndGlyphs">set</text>
<rect x="369.95" y="270.03" width="81.63" height="13.7" rx="2.7" fill="#a8c2b4"/>
<text x="373.45" y="280.73" fill="#000000" textLength="67.73" lengthAdjust="spacingAndGlyphs">Clock_ExitEvac</text>
<path d="M443.28 275.63h5.1l-2.55 4.6z" fill="#266643"/>
<text x="456.48" y="280.73" fill="#ffffff" textLength="2.69" lengthAdjust="spacingAndGlyphs">.</text>
<rect x="461.48" y="270.03" width="79.13" height="13.7" rx="2.7" fill="#a8c2b4"/>
<text x="464.98" y="280.73" fill="#000000" textLength="65.23" lengthAdjust="spacingAndGlyphs">TimerEnabled</text>
<path d="M532.32 275.63h5.1l-2.55 4.6z" fill="#266643"/>
<text x="547.12" y="280.73" fill="#ffffff" textLength="9.69" lengthAdjust="spacingAndGlyphs">to</text>
<path d="M569.32 266.53H610.61V286.93H569.32V280.13c0,-6.83 -5.46,5.46 -5.46,-5.12s5.46,1.71 5.46,-5.12v-3.4z" fill="#415e24" transform="translate(0.7 0.7)"/>
<path d="M569.32 266.53H610.61V286.93H569.32V280.13c0,-6.83 -5.46,5.46 -5.46,-5.12s5.46,1.71 5.46,-5.12v-3.4z" fill="#77ab41"/>
<path d="M610.21 266.93H569.72" stroke="#a3c67e" stroke-width="1" fill="none"/>
<path d="M569.72 280.13V286.53" stroke="#a3c67e" stroke-width="1" fill="none"/>
<path d="M569.52 280.13c0,-6.83 -5.46,5.46 -5.46,-5.12" stroke="#a3c67e" stroke-width="0.7" fill="none" opacity=".8"/>
<rect x="573.12" y="270.03" width="33.49" height="13.7" rx="2.7" fill="#c9ddb3"/>
<text x="576.62" y="280.73" fill="#000000" textLength="19.59" lengthAdjust="spacingAndGlyphs">true</text>
<path d="M598.31 275.63h5.1l-2.55 4.6z" fill="#77ab41"/>
<text x="314.45" y="303.36" fill="#ffffff" textLength="27.33" lengthAdjust="spacingAndGlyphs">else if</text>
<text x="314.45" y="331.26" fill="#ffffff" textLength="21.66" lengthAdjust="spacingAndGlyphs">then</text>
<path d="M363.75 288.66H593.49V317.41H363.75V302.26c0,-6.83 -5.46,5.46 -5.46,-5.12s5.46,1.71 5.46,-5.12v-3.4z" fill="#233e64" transform="translate(0.7 0.7)"/>
<path d="M363.75 288.66H593.49V317.41H363.75V302.26c0,-6.83 -5.46,5.46 -5.46,-5.12s5.46,1.71 5.46,-5.12v-3.4z" fill="#3f71b5"/>
<path d="M593.09 289.06H364.15" stroke="#7c9ecd" stroke-width="1" fill="none"/>
<path d="M364.15 302.26V317.01" stroke="#7c9ecd" stroke-width="1" fill="none"/>
<path d="M363.95 302.26c0,-6.83 -5.46,5.46 -5.46,-5.12" stroke="#7c9ecd" stroke-width="0.7" fill="none" opacity=".8"/>
<path d="M535.06 292.66V314.26H375.50" stroke="#7c9ecd" stroke-width="1" fill="none"/>
<path d="M586.59 292.66V314.26H565.86" stroke="#7c9ecd" stroke-width="1" fill="none"/>
<path d="M375.50 292.66H534.06V313.36H375.50V306.26c0,-6.83 -5.46,5.46 -5.46,-5.12s5.46,1.71 5.46,-5.12v-3.4z" fill="#723419" transform="translate(0.7 0.7)"/>
<path d="M375.50 292.66H534.06V313.36H375.50V306.26c0,-6.83 -5.46,5.46 -5.46,-5.12s5.46,1.71 5.46,-5.12v-3.4z" fill="#d05f2d"/>
<path d="M533.66 293.06H375.90" stroke="#df9270" stroke-width="1" fill="none"/>
<path d="M375.90 306.26V312.96" stroke="#df9270" stroke-width="1" fill="none"/>
<path d="M375.70 306.26c0,-6.83 -5.46,5.46 -5.46,-5.12" stroke="#df9270" stroke-width="0.7" fill="none" opacity=".8"/>
<text x="382.80" y="307.56" fill="#ffffff" textLength="15.44" lengthAdjust="spacingAndGlyphs">get</text>
<rect x="400.90" y="296.76" width="128.76" height="13.7" rx="2.7" fill="#ecbfab"/>
<text x="404.40" y="307.46" fill="#000000" textLength="114.86" lengthAdjust="spacingAndGlyphs">global EvacExitTapCount</text>
<path d="M521.36 302.36h5.1l-2.55 4.6z" fill="#d05f2d"/>
<rect x="537.36" y="295.66" width="20.3" height="14.2" rx="2.7" fill="#b2c6e1"/>
<text x="541.66" y="307.56" fill="#000000" textLength="5.73" lengthAdjust="spacingAndGlyphs">=</text>
<path d="M549.59 302.56h5.1l-2.55 4.6z" fill="#3f71b5"/>
<path d="M565.86 292.66H585.59V313.36H565.86V306.26c0,-6.83 -5.46,5.46 -5.46,-5.12s5.46,1.71 5.46,-5.12v-3.4z" fill="#233e64" transform="translate(0.7 0.7)"/>
<path d="M565.86 292.66H585.59V313.36H565.86V306.26c0,-6.83 -5.46,5.46 -5.46,-5.12s5.46,1.71 5.46,-5.12v-3.4z" fill="#3f71b5"/>
<path d="M585.19 293.06H566.26" stroke="#7c9ecd" stroke-width="1" fill="none"/>
<path d="M566.26 306.26V312.96" stroke="#7c9ecd" stroke-width="1" fill="none"/>
<path d="M566.06 306.26c0,-6.83 -5.46,5.46 -5.46,-5.12" stroke="#7c9ecd" stroke-width="0.7" fill="none" opacity=".8"/>
<rect x="569.26" y="296.86" width="12.43" height="13.7" rx="2.7" fill="#b2c6e1"/>
<text x="572.61" y="307.56" fill="#000000" textLength="5.73" lengthAdjust="spacingAndGlyphs">1</text>
<path d="M343.55 323.26a5.5,5.5 0 0 1 5.5,-5.5H353.75l4.1,2.7 2,0 4.1,-2.7H522.81V338.89H363.95l-4.1,2.7 -2,0 -4.1,-2.7H343.55z" fill="#723419" transform="translate(0.7 0.7)"/>
<path d="M343.55 323.26a5.5,5.5 0 0 1 5.5,-5.5H353.75l4.1,2.7 2,0 4.1,-2.7H522.81V338.89H363.95l-4.1,2.7 -2,0 -4.1,-2.7H343.55z" fill="#d05f2d"/>
<path d="M522.41 318.16H363.95l-4.1,2.7 -2,0 -4.1,-2.7H349.05a5.1,5.1 0 0 0 -5.1,5.1V338.49" stroke="#df9270" stroke-width="1" fill="none"/>
<text x="350.40" y="331.96" fill="#ffffff" textLength="14.06" lengthAdjust="spacingAndGlyphs">set</text>
<rect x="367.65" y="321.26" width="128.76" height="13.7" rx="2.7" fill="#ecbfab"/>
<text x="371.15" y="331.96" fill="#000000" textLength="114.86" lengthAdjust="spacingAndGlyphs">global EvacExitTapCount</text>
<path d="M488.11 326.86h5.1l-2.55 4.6z" fill="#d05f2d"/>
<text x="500.31" y="331.96" fill="#ffffff" textLength="9.69" lengthAdjust="spacingAndGlyphs">to</text>
<path d="M522.81 317.76H542.54V338.16H522.81V331.36c0,-6.83 -5.46,5.46 -5.46,-5.12s5.46,1.71 5.46,-5.12v-3.4z" fill="#233e64" transform="translate(0.7 0.7)"/>
<path d="M522.81 317.76H542.54V338.16H522.81V331.36c0,-6.83 -5.46,5.46 -5.46,-5.12s5.46,1.71 5.46,-5.12v-3.4z" fill="#3f71b5"/>
<path d="M542.14 318.16H523.21" stroke="#7c9ecd" stroke-width="1" fill="none"/>
<path d="M523.21 331.36V337.76" stroke="#7c9ecd" stroke-width="1" fill="none"/>
<path d="M523.01 331.36c0,-6.83 -5.46,5.46 -5.46,-5.12" stroke="#7c9ecd" stroke-width="0.7" fill="none" opacity=".8"/>
<rect x="526.21" y="321.26" width="12.43" height="13.7" rx="2.7" fill="#b2c6e1"/>
<text x="529.56" y="331.96" fill="#000000" textLength="5.73" lengthAdjust="spacingAndGlyphs">0</text>
<path d="M343.55 338.89H353.75l4.1,2.7 2,0 4.1,-2.7H569.32V360.02H363.95l-4.1,2.7 -2,0 -4.1,-2.7H343.55z" fill="#153825" transform="translate(0.7 0.7)"/>
<path d="M343.55 338.89H353.75l4.1,2.7 2,0 4.1,-2.7H569.32V360.02H363.95l-4.1,2.7 -2,0 -4.1,-2.7H343.55z" fill="#266643"/>
<path d="M568.92 339.29H363.95l-4.1,2.7 -2,0 -4.1,-2.7H343.95V359.62" stroke="#6b977f" stroke-width="1" fill="none"/>
<text x="350.40" y="353.09" fill="#ffffff" textLength="14.06" lengthAdjust="spacingAndGlyphs">set</text>
<rect x="369.95" y="342.39" width="81.63" height="13.7" rx="2.7" fill="#a8c2b4"/>
<text x="373.45" y="353.09" fill="#000000" textLength="67.73" lengthAdjust="spacingAndGlyphs">Clock_ExitEvac</text>
<path d="M443.28 347.99h5.1l-2.55 4.6z" fill="#266643"/>
<text x="456.48" y="353.09" fill="#ffffff" textLength="2.69" lengthAdjust="spacingAndGlyphs">.</text>
<rect x="461.48" y="342.39" width="79.13" height="13.7" rx="2.7" fill="#a8c2b4"/>
<text x="464.98" y="353.09" fill="#000000" textLength="65.23" lengthAdjust="spacingAndGlyphs">TimerEnabled</text>
<path d="M532.32 347.99h5.1l-2.55 4.6z" fill="#266643"/>
<text x="547.12" y="353.09" fill="#ffffff" textLength="9.69" lengthAdjust="spacingAndGlyphs">to</text>
<path d="M569.32 338.89H613.13V359.29H569.32V352.49c0,-6.83 -5.46,5.46 -5.46,-5.12s5.46,1.71 5.46,-5.12v-3.4z" fill="#415e24" transform="translate(0.7 0.7)"/>
<path d="M569.32 338.89H613.13V359.29H569.32V352.49c0,-6.83 -5.46,5.46 -5.46,-5.12s5.46,1.71 5.46,-5.12v-3.4z" fill="#77ab41"/>
<path d="M612.73 339.29H569.72" stroke="#a3c67e" stroke-width="1" fill="none"/>
<path d="M569.72 352.49V358.89" stroke="#a3c67e" stroke-width="1" fill="none"/>
<path d="M569.52 352.49c0,-6.83 -5.46,5.46 -5.46,-5.12" stroke="#a3c67e" stroke-width="0.7" fill="none" opacity=".8"/>
<rect x="573.12" y="342.39" width="36.01" height="13.7" rx="2.7" fill="#c9ddb3"/>
<text x="576.62" y="353.09" fill="#000000" textLength="22.11" lengthAdjust="spacingAndGlyphs">false</text>
<path d="M600.83 347.99h5.1l-2.55 4.6z" fill="#77ab41"/>
<path d="M343.55 360.02H353.75l4.1,2.7 2,0 4.1,-2.7H487.82V381.15H363.95l-4.1,2.7 -2,0 -4.1,-2.7H343.55z" fill="#153825" transform="translate(0.7 0.7)"/>
<path d="M343.55 360.02H353.75l4.1,2.7 2,0 4.1,-2.7H487.82V381.15H363.95l-4.1,2.7 -2,0 -4.1,-2.7H343.55z" fill="#266643"/>
<path d="M487.42 360.42H363.95l-4.1,2.7 -2,0 -4.1,-2.7H343.95V380.75" stroke="#6b977f" stroke-width="1" fill="none"/>
<text x="350.40" y="374.22" fill="#ffffff" textLength="14.06" lengthAdjust="spacingAndGlyphs">set</text>
<rect x="369.95" y="363.52" width="34.99" height="13.7" rx="2.7" fill="#a8c2b4"/>
<text x="373.45" y="374.22" fill="#000000" textLength="21.09" lengthAdjust="spacingAndGlyphs">Evac</text>
<path d="M396.64 369.12h5.1l-2.55 4.6z" fill="#266643"/>
<text x="409.84" y="374.22" fill="#ffffff" textLength="2.69" lengthAdjust="spacingAndGlyphs">.</text>
<rect x="414.84" y="363.52" width="44.27" height="13.7" rx="2.7" fill="#a8c2b4"/>
<text x="418.34" y="374.22" fill="#000000" textLength="30.38" lengthAdjust="spacingAndGlyphs">Visible</text>
<path d="M450.82 369.12h5.1l-2.55 4.6z" fill="#266643"/>
<text x="465.62" y="374.22" fill="#ffffff" textLength="9.69" lengthAdjust="spacingAndGlyphs">to</text>
<path d="M487.82 360.02H531.63V380.42H487.82V373.62c0,-6.83 -5.46,5.46 -5.46,-5.12s5.46,1.71 5.46,-5.12v-3.4z" fill="#415e24" transform="translate(0.7 0.7)"/>
<path d="M487.82 360.02H531.63V380.42H487.82V373.62c0,-6.83 -5.46,5.46 -5.46,-5.12s5.46,1.71 5.46,-5.12v-3.4z" fill="#77ab41"/>
<path d="M531.23 360.42H488.22" stroke="#a3c67e" stroke-width="1" fill="none"/>
<path d="M488.22 373.62V380.02" stroke="#a3c67e" stroke-width="1" fill="none"/>
<path d="M488.02 373.62c0,-6.83 -5.46,5.46 -5.46,-5.12" stroke="#a3c67e" stroke-width="0.7" fill="none" opacity=".8"/>
<rect x="491.62" y="363.52" width="36.01" height="13.7" rx="2.7" fill="#c9ddb3"/>
<text x="495.12" y="374.22" fill="#000000" textLength="22.11" lengthAdjust="spacingAndGlyphs">false</text>
<path d="M519.33 369.12h5.1l-2.55 4.6z" fill="#77ab41"/>
<path d="M343.55 381.15H353.75l4.1,2.7 2,0 4.1,-2.7H501.32V402.28H363.95l-4.1,2.7 -2,0 -4.1,-2.7H343.55z" fill="#153825" transform="translate(0.7 0.7)"/>
<path d="M343.55 381.15H353.75l4.1,2.7 2,0 4.1,-2.7H501.32V402.28H363.95l-4.1,2.7 -2,0 -4.1,-2.7H343.55z" fill="#266643"/>
<path d="M500.92 381.55H363.95l-4.1,2.7 -2,0 -4.1,-2.7H343.95V401.88" stroke="#6b977f" stroke-width="1" fill="none"/>
<text x="350.40" y="395.35" fill="#ffffff" textLength="14.06" lengthAdjust="spacingAndGlyphs">set</text>
<rect x="369.95" y="384.65" width="48.49" height="13.7" rx="2.7" fill="#a8c2b4"/>
<text x="373.45" y="395.35" fill="#000000" textLength="34.59" lengthAdjust="spacingAndGlyphs">Forside</text>
<path d="M410.14 390.25h5.1l-2.55 4.6z" fill="#266643"/>
<text x="423.34" y="395.35" fill="#ffffff" textLength="2.69" lengthAdjust="spacingAndGlyphs">.</text>
<rect x="428.34" y="384.65" width="44.27" height="13.7" rx="2.7" fill="#a8c2b4"/>
<text x="431.84" y="395.35" fill="#000000" textLength="30.38" lengthAdjust="spacingAndGlyphs">Visible</text>
<path d="M464.32 390.25h5.1l-2.55 4.6z" fill="#266643"/>
<text x="479.12" y="395.35" fill="#ffffff" textLength="9.69" lengthAdjust="spacingAndGlyphs">to</text>
<path d="M501.32 381.15H542.61V401.55H501.32V394.75c0,-6.83 -5.46,5.46 -5.46,-5.12s5.46,1.71 5.46,-5.12v-3.4z" fill="#415e24" transform="translate(0.7 0.7)"/>
<path d="M501.32 381.15H542.61V401.55H501.32V394.75c0,-6.83 -5.46,5.46 -5.46,-5.12s5.46,1.71 5.46,-5.12v-3.4z" fill="#77ab41"/>
<path d="M542.21 381.55H501.72" stroke="#a3c67e" stroke-width="1" fill="none"/>
<path d="M501.72 394.75V401.15" stroke="#a3c67e" stroke-width="1" fill="none"/>
<path d="M501.52 394.75c0,-6.83 -5.46,5.46 -5.46,-5.12" stroke="#a3c67e" stroke-width="0.7" fill="none" opacity=".8"/>
<rect x="505.12" y="384.65" width="33.49" height="13.7" rx="2.7" fill="#c9ddb3"/>
<text x="508.62" y="395.35" fill="#000000" textLength="19.59" lengthAdjust="spacingAndGlyphs">true</text>
<path d="M530.31 390.25h5.1l-2.55 4.6z" fill="#77ab41"/>
<path d="M343.55 402.28H353.75l4.1,2.7 2,0 4.1,-2.7H518.90V423.41H363.95l-4.1,2.7 -2,0 -4.1,-2.7H343.55z" fill="#153825" transform="translate(0.7 0.7)"/>
<path d="M343.55 402.28H353.75l4.1,2.7 2,0 4.1,-2.7H518.90V423.41H363.95l-4.1,2.7 -2,0 -4.1,-2.7H343.55z" fill="#266643"/>
<path d="M518.50 402.68H363.95l-4.1,2.7 -2,0 -4.1,-2.7H343.95V423.01" stroke="#6b977f" stroke-width="1" fill="none"/>
<text x="350.40" y="416.48" fill="#ffffff" textLength="14.06" lengthAdjust="spacingAndGlyphs">set</text>
<rect x="369.95" y="405.78" width="66.07" height="13.7" rx="2.7" fill="#a8c2b4"/>
<text x="373.45" y="416.48" fill="#000000" textLength="52.17" lengthAdjust="spacingAndGlyphs">MenuBund</text>
<path d="M427.72 411.38h5.1l-2.55 4.6z" fill="#266643"/>
<text x="440.92" y="416.48" fill="#ffffff" textLength="2.69" lengthAdjust="spacingAndGlyphs">.</text>
<rect x="445.92" y="405.78" width="44.27" height="13.7" rx="2.7" fill="#a8c2b4"/>
<text x="449.42" y="416.48" fill="#000000" textLength="30.38" lengthAdjust="spacingAndGlyphs">Visible</text>
<path d="M481.90 411.38h5.1l-2.55 4.6z" fill="#266643"/>
<text x="496.70" y="416.48" fill="#ffffff" textLength="9.69" lengthAdjust="spacingAndGlyphs">to</text>
<path d="M518.90 402.28H560.19V422.68H518.90V415.88c0,-6.83 -5.46,5.46 -5.46,-5.12s5.46,1.71 5.46,-5.12v-3.4z" fill="#415e24" transform="translate(0.7 0.7)"/>
<path d="M518.90 402.28H560.19V422.68H518.90V415.88c0,-6.83 -5.46,5.46 -5.46,-5.12s5.46,1.71 5.46,-5.12v-3.4z" fill="#77ab41"/>
<path d="M559.79 402.68H519.30" stroke="#a3c67e" stroke-width="1" fill="none"/>
<path d="M519.30 415.88V422.28" stroke="#a3c67e" stroke-width="1" fill="none"/>
<path d="M519.10 415.88c0,-6.83 -5.46,5.46 -5.46,-5.12" stroke="#a3c67e" stroke-width="0.7" fill="none" opacity=".8"/>
<rect x="522.70" y="405.78" width="33.49" height="13.7" rx="2.7" fill="#c9ddb3"/>
<text x="526.20" y="416.48" fill="#000000" textLength="19.59" lengthAdjust="spacingAndGlyphs">true</text>
<path d="M547.89 411.38h5.1l-2.55 4.6z" fill="#77ab41"/>
<path d="M343.55 423.41H353.75l4.1,2.7 2,0 4.1,-2.7H564.04V444.54H363.95l-4.1,2.7 -2,0 -4.1,-2.7H349.05a5.5,5.5 0 0 1 -5.5,-5.5z" fill="#153825" transform="translate(0.7 0.7)"/>
<path d="M343.55 423.41H353.75l4.1,2.7 2,0 4.1,-2.7H564.04V444.54H363.95l-4.1,2.7 -2,0 -4.1,-2.7H349.05a5.5,5.5 0 0 1 -5.5,-5.5z" fill="#266643"/>
<path d="M563.64 423.81H363.95l-4.1,2.7 -2,0 -4.1,-2.7H343.95V439.04" stroke="#6b977f" stroke-width="1" fill="none"/>
<text x="350.40" y="437.61" fill="#ffffff" textLength="14.06" lengthAdjust="spacingAndGlyphs">set</text>
<rect x="369.95" y="426.91" width="111.21" height="13.7" rx="2.7" fill="#a8c2b4"/>
<text x="373.45" y="437.61" fill="#000000" textLength="97.31" lengthAdjust="spacingAndGlyphs">FyldendeMellemrum</text>
<path d="M472.86 432.51h5.1l-2.55 4.6z" fill="#266643"/>
<text x="486.06" y="437.61" fill="#ffffff" textLength="2.69" lengthAdjust="spacingAndGlyphs">.</text>
<rect x="491.06" y="426.91" width="44.27" height="13.7" rx="2.7" fill="#a8c2b4"/>
<text x="494.56" y="437.61" fill="#000000" textLength="30.38" lengthAdjust="spacingAndGlyphs">Visible</text>
<path d="M527.04 432.51h5.1l-2.55 4.6z" fill="#266643"/>
<text x="541.84" y="437.61" fill="#ffffff" textLength="9.69" lengthAdjust="spacingAndGlyphs">to</text>
<path d="M564.04 423.41H605.33V443.81H564.04V437.01c0,-6.83 -5.46,5.46 -5.46,-5.12s5.46,1.71 5.46,-5.12v-3.4z" fill="#415e24" transform="translate(0.7 0.7)"/>
<path d="M564.04 423.41H605.33V443.81H564.04V437.01c0,-6.83 -5.46,5.46 -5.46,-5.12s5.46,1.71 5.46,-5.12v-3.4z" fill="#77ab41"/>
<path d="M604.93 423.81H564.44" stroke="#a3c67e" stroke-width="1" fill="none"/>
<path d="M564.44 437.01V443.41" stroke="#a3c67e" stroke-width="1" fill="none"/>
<path d="M564.24 437.01c0,-6.83 -5.46,5.46 -5.46,-5.12" stroke="#a3c67e" stroke-width="0.7" fill="none" opacity=".8"/>
<rect x="567.84" y="426.91" width="33.49" height="13.7" rx="2.7" fill="#c9ddb3"/>
<text x="571.34" y="437.61" fill="#000000" textLength="19.59" lengthAdjust="spacingAndGlyphs">true</text>
<path d="M593.03 432.51h5.1l-2.55 4.6z" fill="#77ab41"/>
<path d="M294.50 474.20a5.5,5.5 0 0 1 5.5,-5.5H438.00V489.80H341.40l-4.1,2.7 -2,0 -4.1,-2.7H326.50a5.5,5.5 0 0 0 -5.5,5.5V527.56a5.5,5.5 0 0 0 5.5,5.5H438.00V540.86H300.00a5.5,5.5 0 0 1 -5.5,-5.5z" fill="#614e1d" transform="translate(0.7 0.7)"/>
<path d="M294.50 474.20a5.5,5.5 0 0 1 5.5,-5.5H438.00V489.80H341.40l-4.1,2.7 -2,0 -4.1,-2.7H326.50a5.5,5.5 0 0 0 -5.5,5.5V527.56a5.5,5.5 0 0 0 5.5,5.5H438.00V540.86H300.00a5.5,5.5 0 0 1 -5.5,-5.5z" fill="#b18e35"/>
<path d="M437.60 469.10H300.00a5.1,5.1 0 0 0 -5.1,5.1V535.36" stroke="#cab276" stroke-width="1" fill="none"/>
<path d="M437.60 533.46H326.50" stroke="#cab276" stroke-width="1" fill="none"/>
<path d="M326.50 532.66a5.5,5.5 0 0 1 -5.1,-5.1V495.30" stroke="#614e1d" stroke-width="0.8" fill="none" opacity=".6"/>
<text x="301.50" y="482.90" fill="#ffffff" textLength="25.91" lengthAdjust="spacingAndGlyphs">when</text>
<rect x="333.40" y="472.20" width="64.57" height="13.7" rx="2.7" fill="#e0d2ae"/>
<text x="336.90" y="482.90" fill="#000000" textLength="50.67" lengthAdjust="spacingAndGlyphs">Clock_Evac</text>
<path d="M389.67 477.80h5.1l-2.55 4.6z" fill="#b18e35"/>
<text x="401.87" y="482.90" fill="#ffffff" textLength="29.30" lengthAdjust="spacingAndGlyphs">.Timer</text>
<text x="301.50" y="503.30" fill="#ffffff" textLength="12.23" lengthAdjust="spacingAndGlyphs">do</text>
<path d="M321.00 495.30a5.5,5.5 0 0 1 5.5,-5.5H331.20l4.1,2.7 2,0 4.1,-2.7H483.20V510.93H341.40l-4.1,2.7 -2,0 -4.1,-2.7H321.00z" fill="#723419" transform="translate(0.7 0.7)"/>
<path d="M321.00 495.30a5.5,5.5 0 0 1 5.5,-5.5H331.20l4.1,2.7 2,0 4.1,-2.7H483.20V510.93H341.40l-4.1,2.7 -2,0 -4.1,-2.7H321.00z" fill="#d05f2d"/>
<path d="M482.80 490.20H341.40l-4.1,2.7 -2,0 -4.1,-2.7H326.50a5.1,5.1 0 0 0 -5.1,5.1V510.53" stroke="#df9270" stroke-width="1" fill="none"/>
<text x="327.85" y="504.00" fill="#ffffff" textLength="14.06" lengthAdjust="spacingAndGlyphs">set</text>
<rect x="345.10" y="493.30" width="111.70" height="13.7" rx="2.7" fill="#ecbfab"/>
<text x="348.60" y="504.00" fill="#000000" textLength="97.80" lengthAdjust="spacingAndGlyphs">global EvacTapCount</text>
<path d="M448.50 498.90h5.1l-2.55 4.6z" fill="#d05f2d"/>
<text x="460.70" y="504.00" fill="#ffffff" textLength="9.69" lengthAdjust="spacingAndGlyphs">to</text>
<path d="M483.20 489.80H502.93V510.20H483.20V503.40c0,-6.83 -5.46,5.46 -5.46,-5.12s5.46,1.71 5.46,-5.12v-3.4z" fill="#233e64" transform="translate(0.7 0.7)"/>
<path d="M483.20 489.80H502.93V510.20H483.20V503.40c0,-6.83 -5.46,5.46 -5.46,-5.12s5.46,1.71 5.46,-5.12v-3.4z" fill="#3f71b5"/>
<path d="M502.53 490.20H483.60" stroke="#7c9ecd" stroke-width="1" fill="none"/>
<path d="M483.60 503.40V509.80" stroke="#7c9ecd" stroke-width="1" fill="none"/>
<path d="M483.40 503.40c0,-6.83 -5.46,5.46 -5.46,-5.12" stroke="#7c9ecd" stroke-width="0.7" fill="none" opacity=".8"/>
<rect x="486.60" y="493.30" width="12.43" height="13.7" rx="2.7" fill="#b2c6e1"/>
<text x="489.95" y="504.00" fill="#000000" textLength="5.73" lengthAdjust="spacingAndGlyphs">0</text>
<path d="M321.00 510.93H331.20l4.1,2.7 2,0 4.1,-2.7H529.71V532.06H341.40l-4.1,2.7 -2,0 -4.1,-2.7H326.50a5.5,5.5 0 0 1 -5.5,-5.5z" fill="#153825" transform="translate(0.7 0.7)"/>
<path d="M321.00 510.93H331.20l4.1,2.7 2,0 4.1,-2.7H529.71V532.06H341.40l-4.1,2.7 -2,0 -4.1,-2.7H326.50a5.5,5.5 0 0 1 -5.5,-5.5z" fill="#266643"/>
<path d="M529.31 511.33H341.40l-4.1,2.7 -2,0 -4.1,-2.7H321.40V526.56" stroke="#6b977f" stroke-width="1" fill="none"/>
<text x="327.85" y="525.13" fill="#ffffff" textLength="14.06" lengthAdjust="spacingAndGlyphs">set</text>
<rect x="347.40" y="514.43" width="64.57" height="13.7" rx="2.7" fill="#a8c2b4"/>
<text x="350.90" y="525.13" fill="#000000" textLength="50.67" lengthAdjust="spacingAndGlyphs">Clock_Evac</text>
<path d="M403.67 520.03h5.1l-2.55 4.6z" fill="#266643"/>
<text x="416.87" y="525.13" fill="#ffffff" textLength="2.69" lengthAdjust="spacingAndGlyphs">.</text>
<rect x="421.87" y="514.43" width="79.13" height="13.7" rx="2.7" fill="#a8c2b4"/>
<text x="425.37" y="525.13" fill="#000000" textLength="65.23" lengthAdjust="spacingAndGlyphs">TimerEnabled</text>
<path d="M492.71 520.03h5.1l-2.55 4.6z" fill="#266643"/>
<text x="507.51" y="525.13" fill="#ffffff" textLength="9.69" lengthAdjust="spacingAndGlyphs">to</text>
<path d="M529.71 510.93H573.52V531.33H529.71V524.53c0,-6.83 -5.46,5.46 -5.46,-5.12s5.46,1.71 5.46,-5.12v-3.4z" fill="#415e24" transform="translate(0.7 0.7)"/>
<path d="M529.71 510.93H573.52V531.33H529.71V524.53c0,-6.83 -5.46,5.46 -5.46,-5.12s5.46,1.71 5.46,-5.12v-3.4z" fill="#77ab41"/>
<path d="M573.12 511.33H530.11" stroke="#a3c67e" stroke-width="1" fill="none"/>
<path d="M530.11 524.53V530.93" stroke="#a3c67e" stroke-width="1" fill="none"/>
<path d="M529.91 524.53c0,-6.83 -5.46,5.46 -5.46,-5.12" stroke="#a3c67e" stroke-width="0.7" fill="none" opacity=".8"/>
<rect x="533.51" y="514.43" width="36.01" height="13.7" rx="2.7" fill="#c9ddb3"/>
<text x="537.01" y="525.13" fill="#000000" textLength="22.11" lengthAdjust="spacingAndGlyphs">false</text>
<path d="M561.22 520.03h5.1l-2.55 4.6z" fill="#77ab41"/>
<path d="M622.90 201.00a5.5,5.5 0 0 1 5.5,-5.5H783.50V216.60H669.80l-4.1,2.7 -2,0 -4.1,-2.7H654.90a5.5,5.5 0 0 0 -5.5,5.5V254.36a5.5,5.5 0 0 0 5.5,5.5H783.50V267.66H628.40a5.5,5.5 0 0 1 -5.5,-5.5z" fill="#614e1d" transform="translate(0.7 0.7)"/>
<path d="M622.90 201.00a5.5,5.5 0 0 1 5.5,-5.5H783.50V216.60H669.80l-4.1,2.7 -2,0 -4.1,-2.7H654.90a5.5,5.5 0 0 0 -5.5,5.5V254.36a5.5,5.5 0 0 0 5.5,5.5H783.50V267.66H628.40a5.5,5.5 0 0 1 -5.5,-5.5z" fill="#b18e35"/>
<path d="M783.10 195.90H628.40a5.1,5.1 0 0 0 -5.1,5.1V262.16" stroke="#cab276" stroke-width="1" fill="none"/>
<path d="M783.10 260.26H654.90" stroke="#cab276" stroke-width="1" fill="none"/>
<path d="M654.90 259.46a5.5,5.5 0 0 1 -5.1,-5.1V222.10" stroke="#614e1d" stroke-width="0.8" fill="none" opacity=".6"/>
<text x="629.90" y="209.70" fill="#ffffff" textLength="25.91" lengthAdjust="spacingAndGlyphs">when</text>
<rect x="661.80" y="199.00" width="81.63" height="13.7" rx="2.7" fill="#e0d2ae"/>
<text x="665.30" y="209.70" fill="#000000" textLength="67.73" lengthAdjust="spacingAndGlyphs">Clock_ExitEvac</text>
<path d="M735.13 204.60h5.1l-2.55 4.6z" fill="#b18e35"/>
<text x="747.33" y="209.70" fill="#ffffff" textLength="29.30" lengthAdjust="spacingAndGlyphs">.Timer</text>
<text x="629.90" y="230.10" fill="#ffffff" textLength="12.23" lengthAdjust="spacingAndGlyphs">do</text>
<path d="M649.40 222.10a5.5,5.5 0 0 1 5.5,-5.5H659.60l4.1,2.7 2,0 4.1,-2.7H828.66V237.73H669.80l-4.1,2.7 -2,0 -4.1,-2.7H649.40z" fill="#723419" transform="translate(0.7 0.7)"/>
<path d="M649.40 222.10a5.5,5.5 0 0 1 5.5,-5.5H659.60l4.1,2.7 2,0 4.1,-2.7H828.66V237.73H669.80l-4.1,2.7 -2,0 -4.1,-2.7H649.40z" fill="#d05f2d"/>
<path d="M828.26 217.00H669.80l-4.1,2.7 -2,0 -4.1,-2.7H654.90a5.1,5.1 0 0 0 -5.1,5.1V237.33" stroke="#df9270" stroke-width="1" fill="none"/>
<text x="656.25" y="230.80" fill="#ffffff" textLength="14.06" lengthAdjust="spacingAndGlyphs">set</text>
<rect x="673.50" y="220.10" width="128.76" height="13.7" rx="2.7" fill="#ecbfab"/>
<text x="677.00" y="230.80" fill="#000000" textLength="114.86" lengthAdjust="spacingAndGlyphs">global EvacExitTapCount</text>
<path d="M793.96 225.70h5.1l-2.55 4.6z" fill="#d05f2d"/>
<text x="806.16" y="230.80" fill="#ffffff" textLength="9.69" lengthAdjust="spacingAndGlyphs">to</text>
<path d="M828.66 216.60H848.39V237.00H828.66V230.20c0,-6.83 -5.46,5.46 -5.46,-5.12s5.46,1.71 5.46,-5.12v-3.4z" fill="#233e64" transform="translate(0.7 0.7)"/>
<path d="M828.66 216.60H848.39V237.00H828.66V230.20c0,-6.83 -5.46,5.46 -5.46,-5.12s5.46,1.71 5.46,-5.12v-3.4z" fill="#3f71b5"/>
<path d="M847.99 217.00H829.06" stroke="#7c9ecd" stroke-width="1" fill="none"/>
<path d="M829.06 230.20V236.60" stroke="#7c9ecd" stroke-width="1" fill="none"/>
<path d="M828.86 230.20c0,-6.83 -5.46,5.46 -5.46,-5.12" stroke="#7c9ecd" stroke-width="0.7" fill="none" opacity=".8"/>
<rect x="832.06" y="220.10" width="12.43" height="13.7" rx="2.7" fill="#b2c6e1"/>
<text x="835.41" y="230.80" fill="#000000" textLength="5.73" lengthAdjust="spacingAndGlyphs">0</text>
<path d="M649.40 237.73H659.60l4.1,2.7 2,0 4.1,-2.7H875.17V258.86H669.80l-4.1,2.7 -2,0 -4.1,-2.7H654.90a5.5,5.5 0 0 1 -5.5,-5.5z" fill="#153825" transform="translate(0.7 0.7)"/>
<path d="M649.40 237.73H659.60l4.1,2.7 2,0 4.1,-2.7H875.17V258.86H669.80l-4.1,2.7 -2,0 -4.1,-2.7H654.90a5.5,5.5 0 0 1 -5.5,-5.5z" fill="#266643"/>
<path d="M874.77 238.13H669.80l-4.1,2.7 -2,0 -4.1,-2.7H649.80V253.36" stroke="#6b977f" stroke-width="1" fill="none"/>
<text x="656.25" y="251.93" fill="#ffffff" textLength="14.06" lengthAdjust="spacingAndGlyphs">set</text>
<rect x="675.80" y="241.23" width="81.63" height="13.7" rx="2.7" fill="#a8c2b4"/>
<text x="679.30" y="251.93" fill="#000000" textLength="67.73" lengthAdjust="spacingAndGlyphs">Clock_ExitEvac</text>
<path d="M749.13 246.83h5.1l-2.55 4.6z" fill="#266643"/>
<text x="762.33" y="251.93" fill="#ffffff" textLength="2.69" lengthAdjust="spacingAndGlyphs">.</text>
<rect x="767.33" y="241.23" width="79.13" height="13.7" rx="2.7" fill="#a8c2b4"/>
<text x="770.83" y="251.93" fill="#000000" textLength="65.23" lengthAdjust="spacingAndGlyphs">TimerEnabled</text>
<path d="M838.17 246.83h5.1l-2.55 4.6z" fill="#266643"/>
<text x="852.97" y="251.93" fill="#ffffff" textLength="9.69" lengthAdjust="spacingAndGlyphs">to</text>
<path d="M875.17 237.73H918.98V258.13H875.17V251.33c0,-6.83 -5.46,5.46 -5.46,-5.12s5.46,1.71 5.46,-5.12v-3.4z" fill="#415e24" transform="translate(0.7 0.7)"/>
<path d="M875.17 237.73H918.98V258.13H875.17V251.33c0,-6.83 -5.46,5.46 -5.46,-5.12s5.46,1.71 5.46,-5.12v-3.4z" fill="#77ab41"/>
<path d="M918.58 238.13H875.57" stroke="#a3c67e" stroke-width="1" fill="none"/>
<path d="M875.57 251.33V257.73" stroke="#a3c67e" stroke-width="1" fill="none"/>
<path d="M875.37 251.33c0,-6.83 -5.46,5.46 -5.46,-5.12" stroke="#a3c67e" stroke-width="0.7" fill="none" opacity=".8"/>
<rect x="878.97" y="241.23" width="36.01" height="13.7" rx="2.7" fill="#c9ddb3"/>
<text x="882.47" y="251.93" fill="#000000" textLength="22.11" lengthAdjust="spacingAndGlyphs">false</text>
<path d="M906.68 246.83h5.1l-2.55 4.6z" fill="#77ab41"/>
<path d="M622.75 283.00a5.5,5.5 0 0 1 5.5,-5.5H768.00V298.60H669.65l-4.1,2.7 -2,0 -4.1,-2.7H654.75a5.5,5.5 0 0 0 -5.5,5.5V572.50a5.5,5.5 0 0 0 5.5,5.5H768.00V585.80H628.25a5.5,5.5 0 0 1 -5.5,-5.5z" fill="#614e1d" transform="translate(0.7 0.7)"/>
<path d="M622.75 283.00a5.5,5.5 0 0 1 5.5,-5.5H768.00V298.60H669.65l-4.1,2.7 -2,0 -4.1,-2.7H654.75a5.5,5.5 0 0 0 -5.5,5.5V572.50a5.5,5.5 0 0 0 5.5,5.5H768.00V585.80H628.25a5.5,5.5 0 0 1 -5.5,-5.5z" fill="#b18e35"/>
<path d="M767.60 277.90H628.25a5.1,5.1 0 0 0 -5.1,5.1V580.30" stroke="#cab276" stroke-width="1" fill="none"/>
<path d="M767.60 578.40H654.75" stroke="#cab276" stroke-width="1" fill="none"/>
<path d="M654.75 577.60a5.5,5.5 0 0 1 -5.1,-5.1V304.10" stroke="#614e1d" stroke-width="0.8" fill="none" opacity=".6"/>
<text x="629.75" y="291.70" fill="#ffffff" textLength="25.91" lengthAdjust="spacingAndGlyphs">when</text>
<rect x="661.65" y="281.00" width="71.62" height="13.7" rx="2.7" fill="#e0d2ae"/>
<text x="665.15" y="291.70" fill="#000000" textLength="57.72" lengthAdjust="spacingAndGlyphs">Button_Evac</text>
<path d="M724.97 286.60h5.1l-2.55 4.6z" fill="#b18e35"/>
<text x="737.17" y="291.70" fill="#ffffff" textLength="23.84" lengthAdjust="spacingAndGlyphs">.Click</text>
<text x="629.75" y="312.10" fill="#ffffff" textLength="12.23" lengthAdjust="spacingAndGlyphs">do</text>
<path d="M649.25 304.10a5.5,5.5 0 0 1 5.5,-5.5H659.45l4.1,2.7 2,0 4.1,-2.7H705.75V327.40H705.95l-4.1,2.7 -2,0 -4.1,-2.7H691.05a5.5,5.5 0 0 0 -5.5,5.5V364.16a5.5,5.5 0 0 0 5.5,5.5H705.75V399.76H705.95l-4.1,2.7 -2,0 -4.1,-2.7H691.05a5.5,5.5 0 0 0 -5.5,5.5V563.30a5.5,5.5 0 0 0 5.5,5.5H705.75V577.00H669.65l-4.1,2.7 -2,0 -4.1,-2.7H654.75a5.5,5.5 0 0 1 -5.5,-5.5z" fill="#614e1d" transform="translate(0.7 0.7)"/>
<path d="M649.25 304.10a5.5,5.5 0 0 1 5.5,-5.5H659.45l4.1,2.7 2,0 4.1,-2.7H705.75V327.40H705.95l-4.1,2.7 -2,0 -4.1,-2.7H691.05a5.5,5.5 0 0 0 -5.5,5.5V364.16a5.5,5.5 0 0 0 5.5,5.5H705.75V399.76H705.95l-4.1,2.7 -2,0 -4.1,-2.7H691.05a5.5,5.5 0 0 0 -5.5,5.5V563.30a5.5,5.5 0 0 0 5.5,5.5H705.75V577.00H669.65l-4.1,2.7 -2,0 -4.1,-2.7H654.75a5.5,5.5 0 0 1 -5.5,-5.5z" fill="#b18e35"/>
<path d="M705.35 299.00H669.65l-4.1,2.7 -2,0 -4.1,-2.7H654.75a5.1,5.1 0 0 0 -5.1,5.1V571.50" stroke="#cab276" stroke-width="1" fill="none"/>
<path d="M691.05 369.26a5.5,5.5 0 0 1 -5.1,-5.1V332.90" stroke="#614e1d" stroke-width="0.8" fill="none" opacity=".6"/>
<path d="M705.35 371.36H691.05" stroke="#cab276" stroke-width="1" fill="none"/>
<path d="M691.05 568.40a5.5,5.5 0 0 1 -5.1,-5.1V405.26" stroke="#614e1d" stroke-width="0.8" fill="none" opacity=".6"/>
<path d="M705.35 569.20H691.05" stroke="#cab276" stroke-width="1" fill="none"/>
<rect x="656.15" y="302.10" width="10.9" height="10.9" rx="2.4" fill="#3b2db8" stroke="#6a5cc0" stroke-width="0.4"/>
<polygon points="661.60,304.05 662.88,305.39 664.67,305.83 664.15,307.60 664.67,309.38 662.88,309.81 661.60,311.15 660.33,309.81 658.53,309.38 659.05,307.60 658.53,305.83 660.33,305.39" fill="#eadfc8" stroke="#eadfc8" stroke-width="0.5" stroke-linejoin="round"/>
<circle cx="661.60" cy="307.60" r="1.35" fill="#3b2db8"/>
<text x="674.85" y="313.00" fill="#ffffff" textLength="6.03" lengthAdjust="spacingAndGlyphs">if</text>
<text x="656.45" y="340.90" fill="#ffffff" textLength="21.66" lengthAdjust="spacingAndGlyphs">then</text>
<path d="M705.75 298.30H918.43V327.05H705.75V311.90c0,-6.83 -5.46,5.46 -5.46,-5.12s5.46,1.71 5.46,-5.12v-3.4z" fill="#233e64" transform="translate(0.7 0.7)"/>
<path d="M705.75 298.30H918.43V327.05H705.75V311.90c0,-6.83 -5.46,5.46 -5.46,-5.12s5.46,1.71 5.46,-5.12v-3.4z" fill="#3f71b5"/>
<path d="M918.03 298.70H706.15" stroke="#7c9ecd" stroke-width="1" fill="none"/>
<path d="M706.15 311.90V326.65" stroke="#7c9ecd" stroke-width="1" fill="none"/>
<path d="M705.95 311.90c0,-6.83 -5.46,5.46 -5.46,-5.12" stroke="#7c9ecd" stroke-width="0.7" fill="none" opacity=".8"/>
<path d="M860.00 302.30V323.90H717.50" stroke="#7c9ecd" stroke-width="1" fill="none"/>
<path d="M911.53 302.30V323.90H890.80" stroke="#7c9ecd" stroke-width="1" fill="none"/>
<path d="M717.50 302.30H859.00V323.00H717.50V315.90c0,-6.83 -5.46,5.46 -5.46,-5.12s5.46,1.71 5.46,-5.12v-3.4z" fill="#723419" transform="translate(0.7 0.7)"/>
<path d="M717.50 302.30H859.00V323.00H717.50V315.90c0,-6.83 -5.46,5.46 -5.46,-5.12s5.46,1.71 5.46,-5.12v-3.4z" fill="#d05f2d"/>
<path d="M858.60 302.70H717.90" stroke="#df9270" stroke-width="1" fill="none"/>
<path d="M717.90 315.90V322.60" stroke="#df9270" stroke-width="1" fill="none"/>
<path d="M717.70 315.90c0,-6.83 -5.46,5.46 -5.46,-5.12" stroke="#df9270" stroke-width="0.7" fill="none" opacity=".8"/>
<text x="724.80" y="317.20" fill="#ffffff" textLength="15.44" lengthAdjust="spacingAndGlyphs">get</text>
<rect x="742.90" y="306.40" width="111.70" height="13.7" rx="2.7" fill="#ecbfab"/>
<text x="746.40" y="317.10" fill="#000000" textLength="97.80" lengthAdjust="spacingAndGlyphs">global EvacTapCount</text>
<path d="M846.30 312.00h5.1l-2.55 4.6z" fill="#d05f2d"/>
<rect x="862.30" y="305.30" width="20.3" height="14.2" rx="2.7" fill="#b2c6e1"/>
<text x="866.60" y="317.20" fill="#000000" textLength="5.73" lengthAdjust="spacingAndGlyphs">=</text>
<path d="M874.53 312.20h5.1l-2.55 4.6z" fill="#3f71b5"/>
<path d="M890.80 302.30H910.53V323.00H890.80V315.90c0,-6.83 -5.46,5.46 -5.46,-5.12s5.46,1.71 5.46,-5.12v-3.4z" fill="#233e64" transform="translate(0.7 0.7)"/>
<path d="M890.80 302.30H910.53V323.00H890.80V315.90c0,-6.83 -5.46,5.46 -5.46,-5.12s5.46,1.71 5.46,-5.12v-3.4z" fill="#3f71b5"/>
<path d="M910.13 302.70H891.20" stroke="#7c9ecd" stroke-width="1" fill="none"/>
<path d="M891.20 315.90V322.60" stroke="#7c9ecd" stroke-width="1" fill="none"/>
<path d="M891.00 315.90c0,-6.83 -5.46,5.46 -5.46,-5.12" stroke="#7c9ecd" stroke-width="0.7" fill="none" opacity=".8"/>
<rect x="894.20" y="306.50" width="12.43" height="13.7" rx="2.7" fill="#b2c6e1"/>
<text x="897.55" y="317.20" fill="#000000" textLength="5.73" lengthAdjust="spacingAndGlyphs">0</text>
<path d="M685.55 332.90a5.5,5.5 0 0 1 5.5,-5.5H695.75l4.1,2.7 2,0 4.1,-2.7H847.75V348.53H705.95l-4.1,2.7 -2,0 -4.1,-2.7H685.55z" fill="#723419" transform="translate(0.7 0.7)"/>
<path d="M685.55 332.90a5.5,5.5 0 0 1 5.5,-5.5H695.75l4.1,2.7 2,0 4.1,-2.7H847.75V348.53H705.95l-4.1,2.7 -2,0 -4.1,-2.7H685.55z" fill="#d05f2d"/>
<path d="M847.35 327.80H705.95l-4.1,2.7 -2,0 -4.1,-2.7H691.05a5.1,5.1 0 0 0 -5.1,5.1V348.13" stroke="#df9270" stroke-width="1" fill="none"/>
<text x="692.40" y="341.60" fill="#ffffff" textLength="14.06" lengthAdjust="spacingAndGlyphs">set</text>
<rect x="709.65" y="330.90" width="111.70" height="13.7" rx="2.7" fill="#ecbfab"/>
<text x="713.15" y="341.60" fill="#000000" textLength="97.80" lengthAdjust="spacingAndGlyphs">global EvacTapCount</text>
<path d="M813.05 336.50h5.1l-2.55 4.6z" fill="#d05f2d"/>
<text x="825.25" y="341.60" fill="#ffffff" textLength="9.69" lengthAdjust="spacingAndGlyphs">to</text>
<path d="M847.75 327.40H867.48V347.80H847.75V341.00c0,-6.83 -5.46,5.46 -5.46,-5.12s5.46,1.71 5.46,-5.12v-3.4z" fill="#233e64" transform="translate(0.7 0.7)"/>
<path d="M847.75 327.40H867.48V347.80H847.75V341.00c0,-6.83 -5.46,5.46 -5.46,-5.12s5.46,1.71 5.46,-5.12v-3.4z" fill="#3f71b5"/>
<path d="M867.08 327.80H848.15" stroke="#7c9ecd" stroke-width="1" fill="none"/>
<path d="M848.15 341.00V347.40" stroke="#7c9ecd" stroke-width="1" fill="none"/>
<path d="M847.95 341.00c0,-6.83 -5.46,5.46 -5.46,-5.12" stroke="#7c9ecd" stroke-width="0.7" fill="none" opacity=".8"/>
<rect x="851.15" y="330.90" width="12.43" height="13.7" rx="2.7" fill="#b2c6e1"/>
<text x="854.50" y="341.60" fill="#000000" textLength="5.73" lengthAdjust="spacingAndGlyphs">1</text>
<path d="M685.55 348.53H695.75l4.1,2.7 2,0 4.1,-2.7H894.26V369.66H705.95l-4.1,2.7 -2,0 -4.1,-2.7H691.05a5.5,5.5 0 0 1 -5.5,-5.5z" fill="#153825" transform="translate(0.7 0.7)"/>
<path d="M685.55 348.53H695.75l4.1,2.7 2,0 4.1,-2.7H894.26V369.66H705.95l-4.1,2.7 -2,0 -4.1,-2.7H691.05a5.5,5.5 0 0 1 -5.5,-5.5z" fill="#266643"/>
<path d="M893.86 348.93H705.95l-4.1,2.7 -2,0 -4.1,-2.7H685.95V364.16" stroke="#6b977f" stroke-width="1" fill="none"/>
<text x="692.40" y="362.73" fill="#ffffff" textLength="14.06" lengthAdjust="spacingAndGlyphs">set</text>
<rect x="711.95" y="352.03" width="64.57" height="13.7" rx="2.7" fill="#a8c2b4"/>
<text x="715.45" y="362.73" fill="#000000" textLength="50.67" lengthAdjust="spacingAndGlyphs">Clock_Evac</text>
<path d="M768.22 357.63h5.1l-2.55 4.6z" fill="#266643"/>
<text x="781.42" y="362.73" fill="#ffffff" textLength="2.69" lengthAdjust="spacingAndGlyphs">.</text>
<rect x="786.42" y="352.03" width="79.13" height="13.7" rx="2.7" fill="#a8c2b4"/>
<text x="789.92" y="362.73" fill="#000000" textLength="65.23" lengthAdjust="spacingAndGlyphs">TimerEnabled</text>
<path d="M857.26 357.63h5.1l-2.55 4.6z" fill="#266643"/>
<text x="872.06" y="362.73" fill="#ffffff" textLength="9.69" lengthAdjust="spacingAndGlyphs">to</text>
<path d="M894.26 348.53H935.55V368.93H894.26V362.13c0,-6.83 -5.46,5.46 -5.46,-5.12s5.46,1.71 5.46,-5.12v-3.4z" fill="#415e24" transform="translate(0.7 0.7)"/>
<path d="M894.26 348.53H935.55V368.93H894.26V362.13c0,-6.83 -5.46,5.46 -5.46,-5.12s5.46,1.71 5.46,-5.12v-3.4z" fill="#77ab41"/>
<path d="M935.15 348.93H894.66" stroke="#a3c67e" stroke-width="1" fill="none"/>
<path d="M894.66 362.13V368.53" stroke="#a3c67e" stroke-width="1" fill="none"/>
<path d="M894.46 362.13c0,-6.83 -5.46,5.46 -5.46,-5.12" stroke="#a3c67e" stroke-width="0.7" fill="none" opacity=".8"/>
<rect x="898.06" y="352.03" width="33.49" height="13.7" rx="2.7" fill="#c9ddb3"/>
<text x="901.56" y="362.73" fill="#000000" textLength="19.59" lengthAdjust="spacingAndGlyphs">true</text>
<path d="M923.25 357.63h5.1l-2.55 4.6z" fill="#77ab41"/>
<text x="656.45" y="385.36" fill="#ffffff" textLength="27.33" lengthAdjust="spacingAndGlyphs">else if</text>
<text x="656.45" y="413.26" fill="#ffffff" textLength="21.66" lengthAdjust="spacingAndGlyphs">then</text>
<path d="M705.75 370.66H918.43V399.41H705.75V384.26c0,-6.83 -5.46,5.46 -5.46,-5.12s5.46,1.71 5.46,-5.12v-3.4z" fill="#233e64" transform="translate(0.7 0.7)"/>
<path d="M705.75 370.66H918.43V399.41H705.75V384.26c0,-6.83 -5.46,5.46 -5.46,-5.12s5.46,1.71 5.46,-5.12v-3.4z" fill="#3f71b5"/>
<path d="M918.03 371.06H706.15" stroke="#7c9ecd" stroke-width="1" fill="none"/>
<path d="M706.15 384.26V399.01" stroke="#7c9ecd" stroke-width="1" fill="none"/>
<path d="M705.95 384.26c0,-6.83 -5.46,5.46 -5.46,-5.12" stroke="#7c9ecd" stroke-width="0.7" fill="none" opacity=".8"/>
<path d="M860.00 374.66V396.26H717.50" stroke="#7c9ecd" stroke-width="1" fill="none"/>
<path d="M911.53 374.66V396.26H890.80" stroke="#7c9ecd" stroke-width="1" fill="none"/>
<path d="M717.50 374.66H859.00V395.36H717.50V388.26c0,-6.83 -5.46,5.46 -5.46,-5.12s5.46,1.71 5.46,-5.12v-3.4z" fill="#723419" transform="translate(0.7 0.7)"/>
<path d="M717.50 374.66H859.00V395.36H717.50V388.26c0,-6.83 -5.46,5.46 -5.46,-5.12s5.46,1.71 5.46,-5.12v-3.4z" fill="#d05f2d"/>
<path d="M858.60 375.06H717.90" stroke="#df9270" stroke-width="1" fill="none"/>
<path d="M717.90 388.26V394.96" stroke="#df9270" stroke-width="1" fill="none"/>
<path d="M717.70 388.26c0,-6.83 -5.46,5.46 -5.46,-5.12" stroke="#df9270" stroke-width="0.7" fill="none" opacity=".8"/>
<text x="724.80" y="389.56" fill="#ffffff" textLength="15.44" lengthAdjust="spacingAndGlyphs">get</text>
<rect x="742.90" y="378.76" width="111.70" height="13.7" rx="2.7" fill="#ecbfab"/>
<text x="746.40" y="389.46" fill="#000000" textLength="97.80" lengthAdjust="spacingAndGlyphs">global EvacTapCount</text>
<path d="M846.30 384.36h5.1l-2.55 4.6z" fill="#d05f2d"/>
<rect x="862.30" y="377.66" width="20.3" height="14.2" rx="2.7" fill="#b2c6e1"/>
<text x="866.60" y="389.56" fill="#000000" textLength="5.73" lengthAdjust="spacingAndGlyphs">=</text>
<path d="M874.53 384.56h5.1l-2.55 4.6z" fill="#3f71b5"/>
<path d="M890.80 374.66H910.53V395.36H890.80V388.26c0,-6.83 -5.46,5.46 -5.46,-5.12s5.46,1.71 5.46,-5.12v-3.4z" fill="#233e64" transform="translate(0.7 0.7)"/>
<path d="M890.80 374.66H910.53V395.36H890.80V388.26c0,-6.83 -5.46,5.46 -5.46,-5.12s5.46,1.71 5.46,-5.12v-3.4z" fill="#3f71b5"/>
<path d="M910.13 375.06H891.20" stroke="#7c9ecd" stroke-width="1" fill="none"/>
<path d="M891.20 388.26V394.96" stroke="#7c9ecd" stroke-width="1" fill="none"/>
<path d="M891.00 388.26c0,-6.83 -5.46,5.46 -5.46,-5.12" stroke="#7c9ecd" stroke-width="0.7" fill="none" opacity=".8"/>
<rect x="894.20" y="378.86" width="12.43" height="13.7" rx="2.7" fill="#b2c6e1"/>
<text x="897.55" y="389.56" fill="#000000" textLength="5.73" lengthAdjust="spacingAndGlyphs">1</text>
<path d="M685.55 405.26a5.5,5.5 0 0 1 5.5,-5.5H695.75l4.1,2.7 2,0 4.1,-2.7H847.75V420.89H705.95l-4.1,2.7 -2,0 -4.1,-2.7H685.55z" fill="#723419" transform="translate(0.7 0.7)"/>
<path d="M685.55 405.26a5.5,5.5 0 0 1 5.5,-5.5H695.75l4.1,2.7 2,0 4.1,-2.7H847.75V420.89H705.95l-4.1,2.7 -2,0 -4.1,-2.7H685.55z" fill="#d05f2d"/>
<path d="M847.35 400.16H705.95l-4.1,2.7 -2,0 -4.1,-2.7H691.05a5.1,5.1 0 0 0 -5.1,5.1V420.49" stroke="#df9270" stroke-width="1" fill="none"/>
<text x="692.40" y="413.96" fill="#ffffff" textLength="14.06" lengthAdjust="spacingAndGlyphs">set</text>
<rect x="709.65" y="403.26" width="111.70" height="13.7" rx="2.7" fill="#ecbfab"/>
<text x="713.15" y="413.96" fill="#000000" textLength="97.80" lengthAdjust="spacingAndGlyphs">global EvacTapCount</text>
<path d="M813.05 408.86h5.1l-2.55 4.6z" fill="#d05f2d"/>
<text x="825.25" y="413.96" fill="#ffffff" textLength="9.69" lengthAdjust="spacingAndGlyphs">to</text>
<path d="M847.75 399.76H867.48V420.16H847.75V413.36c0,-6.83 -5.46,5.46 -5.46,-5.12s5.46,1.71 5.46,-5.12v-3.4z" fill="#233e64" transform="translate(0.7 0.7)"/>
<path d="M847.75 399.76H867.48V420.16H847.75V413.36c0,-6.83 -5.46,5.46 -5.46,-5.12s5.46,1.71 5.46,-5.12v-3.4z" fill="#3f71b5"/>
<path d="M867.08 400.16H848.15" stroke="#7c9ecd" stroke-width="1" fill="none"/>
<path d="M848.15 413.36V419.76" stroke="#7c9ecd" stroke-width="1" fill="none"/>
<path d="M847.95 413.36c0,-6.83 -5.46,5.46 -5.46,-5.12" stroke="#7c9ecd" stroke-width="0.7" fill="none" opacity=".8"/>
<rect x="851.15" y="403.26" width="12.43" height="13.7" rx="2.7" fill="#b2c6e1"/>
<text x="854.50" y="413.96" fill="#000000" textLength="5.73" lengthAdjust="spacingAndGlyphs">0</text>
<path d="M685.55 420.89H695.75l4.1,2.7 2,0 4.1,-2.7H894.26V442.02H705.95l-4.1,2.7 -2,0 -4.1,-2.7H685.55z" fill="#153825" transform="translate(0.7 0.7)"/>
<path d="M685.55 420.89H695.75l4.1,2.7 2,0 4.1,-2.7H894.26V442.02H705.95l-4.1,2.7 -2,0 -4.1,-2.7H685.55z" fill="#266643"/>
<path d="M893.86 421.29H705.95l-4.1,2.7 -2,0 -4.1,-2.7H685.95V441.62" stroke="#6b977f" stroke-width="1" fill="none"/>
<text x="692.40" y="435.09" fill="#ffffff" textLength="14.06" lengthAdjust="spacingAndGlyphs">set</text>
<rect x="711.95" y="424.39" width="64.57" height="13.7" rx="2.7" fill="#a8c2b4"/>
<text x="715.45" y="435.09" fill="#000000" textLength="50.67" lengthAdjust="spacingAndGlyphs">Clock_Evac</text>
<path d="M768.22 429.99h5.1l-2.55 4.6z" fill="#266643"/>
<text x="781.42" y="435.09" fill="#ffffff" textLength="2.69" lengthAdjust="spacingAndGlyphs">.</text>
<rect x="786.42" y="424.39" width="79.13" height="13.7" rx="2.7" fill="#a8c2b4"/>
<text x="789.92" y="435.09" fill="#000000" textLength="65.23" lengthAdjust="spacingAndGlyphs">TimerEnabled</text>
<path d="M857.26 429.99h5.1l-2.55 4.6z" fill="#266643"/>
<text x="872.06" y="435.09" fill="#ffffff" textLength="9.69" lengthAdjust="spacingAndGlyphs">to</text>
<path d="M894.26 420.89H938.07V441.29H894.26V434.49c0,-6.83 -5.46,5.46 -5.46,-5.12s5.46,1.71 5.46,-5.12v-3.4z" fill="#415e24" transform="translate(0.7 0.7)"/>
<path d="M894.26 420.89H938.07V441.29H894.26V434.49c0,-6.83 -5.46,5.46 -5.46,-5.12s5.46,1.71 5.46,-5.12v-3.4z" fill="#77ab41"/>
<path d="M937.67 421.29H894.66" stroke="#a3c67e" stroke-width="1" fill="none"/>
<path d="M894.66 434.49V440.89" stroke="#a3c67e" stroke-width="1" fill="none"/>
<path d="M894.46 434.49c0,-6.83 -5.46,5.46 -5.46,-5.12" stroke="#a3c67e" stroke-width="0.7" fill="none" opacity=".8"/>
<rect x="898.06" y="424.39" width="36.01" height="13.7" rx="2.7" fill="#c9ddb3"/>
<text x="901.56" y="435.09" fill="#000000" textLength="22.11" lengthAdjust="spacingAndGlyphs">false</text>
<path d="M925.77 429.99h5.1l-2.55 4.6z" fill="#77ab41"/>
<path d="M685.55 442.02H695.75l4.1,2.7 2,0 4.1,-2.7H829.76V463.15H705.95l-4.1,2.7 -2,0 -4.1,-2.7H685.55z" fill="#723419" transform="translate(0.7 0.7)"/>
<path d="M685.55 442.02H695.75l4.1,2.7 2,0 4.1,-2.7H829.76V463.15H705.95l-4.1,2.7 -2,0 -4.1,-2.7H685.55z" fill="#d05f2d"/>
<path d="M829.36 442.42H705.95l-4.1,2.7 -2,0 -4.1,-2.7H685.95V462.75" stroke="#df9270" stroke-width="1" fill="none"/>
<text x="692.40" y="456.22" fill="#ffffff" textLength="14.06" lengthAdjust="spacingAndGlyphs">set</text>
<rect x="709.65" y="445.52" width="93.71" height="13.7" rx="2.7" fill="#ecbfab"/>
<text x="713.15" y="456.22" fill="#000000" textLength="79.81" lengthAdjust="spacingAndGlyphs">global EvacMode</text>
<path d="M795.06 451.12h5.1l-2.55 4.6z" fill="#d05f2d"/>
<text x="807.26" y="456.22" fill="#ffffff" textLength="9.69" lengthAdjust="spacingAndGlyphs">to</text>
<path d="M829.76 442.02H871.06V462.42H829.76V455.62c0,-6.83 -5.46,5.46 -5.46,-5.12s5.46,1.71 5.46,-5.12v-3.4z" fill="#415e24" transform="translate(0.7 0.7)"/>
<path d="M829.76 442.02H871.06V462.42H829.76V455.62c0,-6.83 -5.46,5.46 -5.46,-5.12s5.46,1.71 5.46,-5.12v-3.4z" fill="#77ab41"/>
<path d="M870.66 442.42H830.16" stroke="#a3c67e" stroke-width="1" fill="none"/>
<path d="M830.16 455.62V462.02" stroke="#a3c67e" stroke-width="1" fill="none"/>
<path d="M829.96 455.62c0,-6.83 -5.46,5.46 -5.46,-5.12" stroke="#a3c67e" stroke-width="0.7" fill="none" opacity=".8"/>
<rect x="833.56" y="445.52" width="33.49" height="13.7" rx="2.7" fill="#c9ddb3"/>
<text x="837.06" y="456.22" fill="#000000" textLength="19.59" lengthAdjust="spacingAndGlyphs">true</text>
<path d="M858.76 451.12h5.1l-2.55 4.6z" fill="#77ab41"/>
<path d="M685.55 463.15H695.75l4.1,2.7 2,0 4.1,-2.7H829.82V484.28H705.95l-4.1,2.7 -2,0 -4.1,-2.7H685.55z" fill="#153825" transform="translate(0.7 0.7)"/>
<path d="M685.55 463.15H695.75l4.1,2.7 2,0 4.1,-2.7H829.82V484.28H705.95l-4.1,2.7 -2,0 -4.1,-2.7H685.55z" fill="#266643"/>
<path d="M829.42 463.55H705.95l-4.1,2.7 -2,0 -4.1,-2.7H685.95V483.88" stroke="#6b977f" stroke-width="1" fill="none"/>
<text x="692.40" y="477.35" fill="#ffffff" textLength="14.06" lengthAdjust="spacingAndGlyphs">set</text>
<rect x="711.95" y="466.65" width="34.99" height="13.7" rx="2.7" fill="#a8c2b4"/>
<text x="715.45" y="477.35" fill="#000000" textLength="21.09" lengthAdjust="spacingAndGlyphs">Evac</text>
<path d="M738.64 472.25h5.1l-2.55 4.6z" fill="#266643"/>
<text x="751.84" y="477.35" fill="#ffffff" textLength="2.69" lengthAdjust="spacingAndGlyphs">.</text>
<rect x="756.84" y="466.65" width="44.27" height="13.7" rx="2.7" fill="#a8c2b4"/>
<text x="760.34" y="477.35" fill="#000000" textLength="30.38" lengthAdjust="spacingAndGlyphs">Visible</text>
<path d="M792.82 472.25h5.1l-2.55 4.6z" fill="#266643"/>
<text x="807.62" y="477.35" fill="#ffffff" textLength="9.69" lengthAdjust="spacingAndGlyphs">to</text>
<path d="M829.82 463.15H871.11V483.55H829.82V476.75c0,-6.83 -5.46,5.46 -5.46,-5.12s5.46,1.71 5.46,-5.12v-3.4z" fill="#415e24" transform="translate(0.7 0.7)"/>
<path d="M829.82 463.15H871.11V483.55H829.82V476.75c0,-6.83 -5.46,5.46 -5.46,-5.12s5.46,1.71 5.46,-5.12v-3.4z" fill="#77ab41"/>
<path d="M870.71 463.55H830.22" stroke="#a3c67e" stroke-width="1" fill="none"/>
<path d="M830.22 476.75V483.15" stroke="#a3c67e" stroke-width="1" fill="none"/>
<path d="M830.02 476.75c0,-6.83 -5.46,5.46 -5.46,-5.12" stroke="#a3c67e" stroke-width="0.7" fill="none" opacity=".8"/>
<rect x="833.62" y="466.65" width="33.49" height="13.7" rx="2.7" fill="#c9ddb3"/>
<text x="837.12" y="477.35" fill="#000000" textLength="19.59" lengthAdjust="spacingAndGlyphs">true</text>
<path d="M858.81 472.25h5.1l-2.55 4.6z" fill="#77ab41"/>
<path d="M685.55 484.28H695.75l4.1,2.7 2,0 4.1,-2.7H785.21V505.41H705.95l-4.1,2.7 -2,0 -4.1,-2.7H685.55z" fill="#442e49" transform="translate(0.7 0.7)"/>
<path d="M685.55 484.28H695.75l4.1,2.7 2,0 4.1,-2.7H785.21V505.41H705.95l-4.1,2.7 -2,0 -4.1,-2.7H685.55z" fill="#7c5385"/>
<path d="M784.81 484.68H705.95l-4.1,2.7 -2,0 -4.1,-2.7H685.95V505.01" stroke="#a68aac" stroke-width="1" fill="none"/>
<text x="692.40" y="498.48" fill="#ffffff" textLength="15.61" lengthAdjust="spacingAndGlyphs">call</text>
<rect x="713.95" y="487.78" width="67.76" height="13.7" rx="2.7" fill="#cbbace"/>
<text x="717.45" y="498.48" fill="#000000" textLength="53.86" lengthAdjust="spacingAndGlyphs">Evac_Check</text>
<path d="M773.41 493.38h5.1l-2.55 4.6z" fill="#7c5385"/>
<path d="M685.55 505.41H695.75l4.1,2.7 2,0 4.1,-2.7H843.32V526.54H705.95l-4.1,2.7 -2,0 -4.1,-2.7H685.55z" fill="#153825" transform="translate(0.7 0.7)"/>
<path d="M685.55 505.41H695.75l4.1,2.7 2,0 4.1,-2.7H843.32V526.54H705.95l-4.1,2.7 -2,0 -4.1,-2.7H685.55z" fill="#266643"/>
<path d="M842.92 505.81H705.95l-4.1,2.7 -2,0 -4.1,-2.7H685.95V526.14" stroke="#6b977f" stroke-width="1" fill="none"/>
<text x="692.40" y="519.61" fill="#ffffff" textLength="14.06" lengthAdjust="spacingAndGlyphs">set</text>
<rect x="711.95" y="508.91" width="48.49" height="13.7" rx="2.7" fill="#a8c2b4"/>
<text x="715.45" y="519.61" fill="#000000" textLength="34.59" lengthAdjust="spacingAndGlyphs">Forside</text>
<path d="M752.14 514.51h5.1l-2.55 4.6z" fill="#266643"/>
<text x="765.34" y="519.61" fill="#ffffff" textLength="2.69" lengthAdjust="spacingAndGlyphs">.</text>
<rect x="770.34" y="508.91" width="44.27" height="13.7" rx="2.7" fill="#a8c2b4"/>
<text x="773.84" y="519.61" fill="#000000" textLength="30.38" lengthAdjust="spacingAndGlyphs">Visible</text>
<path d="M806.32 514.51h5.1l-2.55 4.6z" fill="#266643"/>
<text x="821.12" y="519.61" fill="#ffffff" textLength="9.69" lengthAdjust="spacingAndGlyphs">to</text>
<path d="M843.32 505.41H887.13V525.81H843.32V519.01c0,-6.83 -5.46,5.46 -5.46,-5.12s5.46,1.71 5.46,-5.12v-3.4z" fill="#415e24" transform="translate(0.7 0.7)"/>
<path d="M843.32 505.41H887.13V525.81H843.32V519.01c0,-6.83 -5.46,5.46 -5.46,-5.12s5.46,1.71 5.46,-5.12v-3.4z" fill="#77ab41"/>
<path d="M886.73 505.81H843.72" stroke="#a3c67e" stroke-width="1" fill="none"/>
<path d="M843.72 519.01V525.41" stroke="#a3c67e" stroke-width="1" fill="none"/>
<path d="M843.52 519.01c0,-6.83 -5.46,5.46 -5.46,-5.12" stroke="#a3c67e" stroke-width="0.7" fill="none" opacity=".8"/>
<rect x="847.12" y="508.91" width="36.01" height="13.7" rx="2.7" fill="#c9ddb3"/>
<text x="850.62" y="519.61" fill="#000000" textLength="22.11" lengthAdjust="spacingAndGlyphs">false</text>
<path d="M874.83 514.51h5.1l-2.55 4.6z" fill="#77ab41"/>
<path d="M685.55 526.54H695.75l4.1,2.7 2,0 4.1,-2.7H860.90V547.67H705.95l-4.1,2.7 -2,0 -4.1,-2.7H685.55z" fill="#153825" transform="translate(0.7 0.7)"/>
<path d="M685.55 526.54H695.75l4.1,2.7 2,0 4.1,-2.7H860.90V547.67H705.95l-4.1,2.7 -2,0 -4.1,-2.7H685.55z" fill="#266643"/>
<path d="M860.50 526.94H705.95l-4.1,2.7 -2,0 -4.1,-2.7H685.95V547.27" stroke="#6b977f" stroke-width="1" fill="none"/>
<text x="692.40" y="540.74" fill="#ffffff" textLength="14.06" lengthAdjust="spacingAndGlyphs">set</text>
<rect x="711.95" y="530.04" width="66.07" height="13.7" rx="2.7" fill="#a8c2b4"/>
<text x="715.45" y="540.74" fill="#000000" textLength="52.17" lengthAdjust="spacingAndGlyphs">MenuBund</text>
<path d="M769.72 535.64h5.1l-2.55 4.6z" fill="#266643"/>
<text x="782.92" y="540.74" fill="#ffffff" textLength="2.69" lengthAdjust="spacingAndGlyphs">.</text>
<rect x="787.92" y="530.04" width="44.27" height="13.7" rx="2.7" fill="#a8c2b4"/>
<text x="791.42" y="540.74" fill="#000000" textLength="30.38" lengthAdjust="spacingAndGlyphs">Visible</text>
<path d="M823.90 535.64h5.1l-2.55 4.6z" fill="#266643"/>
<text x="838.70" y="540.74" fill="#ffffff" textLength="9.69" lengthAdjust="spacingAndGlyphs">to</text>
<path d="M860.90 526.54H904.71V546.94H860.90V540.14c0,-6.83 -5.46,5.46 -5.46,-5.12s5.46,1.71 5.46,-5.12v-3.4z" fill="#415e24" transform="translate(0.7 0.7)"/>
<path d="M860.90 526.54H904.71V546.94H860.90V540.14c0,-6.83 -5.46,5.46 -5.46,-5.12s5.46,1.71 5.46,-5.12v-3.4z" fill="#77ab41"/>
<path d="M904.31 526.94H861.30" stroke="#a3c67e" stroke-width="1" fill="none"/>
<path d="M861.30 540.14V546.54" stroke="#a3c67e" stroke-width="1" fill="none"/>
<path d="M861.10 540.14c0,-6.83 -5.46,5.46 -5.46,-5.12" stroke="#a3c67e" stroke-width="0.7" fill="none" opacity=".8"/>
<rect x="864.70" y="530.04" width="36.01" height="13.7" rx="2.7" fill="#c9ddb3"/>
<text x="868.20" y="540.74" fill="#000000" textLength="22.11" lengthAdjust="spacingAndGlyphs">false</text>
<path d="M892.41 535.64h5.1l-2.55 4.6z" fill="#77ab41"/>
<path d="M685.55 547.67H695.75l4.1,2.7 2,0 4.1,-2.7H906.04V568.80H705.95l-4.1,2.7 -2,0 -4.1,-2.7H691.05a5.5,5.5 0 0 1 -5.5,-5.5z" fill="#153825" transform="translate(0.7 0.7)"/>
<path d="M685.55 547.67H695.75l4.1,2.7 2,0 4.1,-2.7H906.04V568.80H705.95l-4.1,2.7 -2,0 -4.1,-2.7H691.05a5.5,5.5 0 0 1 -5.5,-5.5z" fill="#266643"/>
<path d="M905.64 548.07H705.95l-4.1,2.7 -2,0 -4.1,-2.7H685.95V563.30" stroke="#6b977f" stroke-width="1" fill="none"/>
<text x="692.40" y="561.87" fill="#ffffff" textLength="14.06" lengthAdjust="spacingAndGlyphs">set</text>
<rect x="711.95" y="551.17" width="111.21" height="13.7" rx="2.7" fill="#a8c2b4"/>
<text x="715.45" y="561.87" fill="#000000" textLength="97.31" lengthAdjust="spacingAndGlyphs">FyldendeMellemrum</text>
<path d="M814.86 556.77h5.1l-2.55 4.6z" fill="#266643"/>
<text x="828.06" y="561.87" fill="#ffffff" textLength="2.69" lengthAdjust="spacingAndGlyphs">.</text>
<rect x="833.06" y="551.17" width="44.27" height="13.7" rx="2.7" fill="#a8c2b4"/>
<text x="836.56" y="561.87" fill="#000000" textLength="30.38" lengthAdjust="spacingAndGlyphs">Visible</text>
<path d="M869.04 556.77h5.1l-2.55 4.6z" fill="#266643"/>
<text x="883.84" y="561.87" fill="#ffffff" textLength="9.69" lengthAdjust="spacingAndGlyphs">to</text>
<path d="M906.04 547.67H949.85V568.07H906.04V561.27c0,-6.83 -5.46,5.46 -5.46,-5.12s5.46,1.71 5.46,-5.12v-3.4z" fill="#415e24" transform="translate(0.7 0.7)"/>
<path d="M906.04 547.67H949.85V568.07H906.04V561.27c0,-6.83 -5.46,5.46 -5.46,-5.12s5.46,1.71 5.46,-5.12v-3.4z" fill="#77ab41"/>
<path d="M949.45 548.07H906.44" stroke="#a3c67e" stroke-width="1" fill="none"/>
<path d="M906.44 561.27V567.67" stroke="#a3c67e" stroke-width="1" fill="none"/>
<path d="M906.24 561.27c0,-6.83 -5.46,5.46 -5.46,-5.12" stroke="#a3c67e" stroke-width="0.7" fill="none" opacity=".8"/>
<rect x="909.84" y="551.17" width="36.01" height="13.7" rx="2.7" fill="#c9ddb3"/>
<text x="913.34" y="561.87" fill="#000000" textLength="22.11" lengthAdjust="spacingAndGlyphs">false</text>
<path d="M937.55 556.77h5.1l-2.55 4.6z" fill="#77ab41"/>
<path d="M950.40 228.30a5.5,5.5 0 0 1 5.5,-5.5H1053.76V243.90H997.80l-4.1,2.7 -2,0 -4.1,-2.7H982.90a5.5,5.5 0 0 0 -5.5,5.5V731.00H950.40z" fill="#7c5385"/>
<path d="M1053.36 223.20H955.90a5.1,5.1 0 0 0 -5.1,5.1V731.00" stroke="#a68aac" stroke-width="1" fill="none"/>
<rect x="957.40" y="226.30" width="10.9" height="10.9" rx="2.4" fill="#3b2db8" stroke="#6a5cc0" stroke-width="0.4"/>
<polygon points="962.85,228.25 964.12,229.59 965.92,230.03 965.40,231.80 965.92,233.58 964.12,234.01 962.85,235.35 961.58,234.01 959.78,233.58 960.30,231.80 959.78,230.03 961.58,229.59" fill="#eadfc8" stroke="#eadfc8" stroke-width="0.5" stroke-linejoin="round"/>
<circle cx="962.85" cy="231.80" r="1.35" fill="#3b2db8"/>
<text x="976.20" y="237.00" fill="#ffffff" textLength="9.69" lengthAdjust="spacingAndGlyphs">to</text>
<rect x="988.90" y="226.30" width="60.66" height="13.7" rx="2.7" fill="#cbbace"/>
<text x="992.30" y="237.00" fill="#000000" textLength="53.86" lengthAdjust="spacingAndGlyphs">Evac_Check</text>
<text x="957.40" y="257.40" fill="#ffffff" textLength="12.23" lengthAdjust="spacingAndGlyphs">do</text>
<path d="M977.40 249.40a5.5,5.5 0 0 1 5.5,-5.5H987.60l4.1,2.7 2,0 4.1,-2.7H1171.50V265.03H997.80l-4.1,2.7 -2,0 -4.1,-2.7H977.40z" fill="#153825" transform="translate(0.7 0.7)"/>
<path d="M977.40 249.40a5.5,5.5 0 0 1 5.5,-5.5H987.60l4.1,2.7 2,0 4.1,-2.7H1171.50V265.03H997.80l-4.1,2.7 -2,0 -4.1,-2.7H977.40z" fill="#266643"/>
<path d="M1171.10 244.30H997.80l-4.1,2.7 -2,0 -4.1,-2.7H982.90a5.1,5.1 0 0 0 -5.1,5.1V264.63" stroke="#6b977f" stroke-width="1" fill="none"/>
<text x="984.25" y="258.10" fill="#ffffff" textLength="14.06" lengthAdjust="spacingAndGlyphs">set</text>
<rect x="1003.80" y="247.40" width="75.06" height="13.7" rx="2.7" fill="#a8c2b4"/>
<text x="1007.30" y="258.10" fill="#000000" textLength="61.16" lengthAdjust="spacingAndGlyphs">CheckBox_ID</text>
<path d="M1070.56 253.00h5.1l-2.55 4.6z" fill="#266643"/>
<text x="1083.76" y="258.10" fill="#ffffff" textLength="2.69" lengthAdjust="spacingAndGlyphs">.</text>
<rect x="1088.76" y="247.40" width="54.04" height="13.7" rx="2.7" fill="#a8c2b4"/>
<text x="1092.26" y="258.10" fill="#000000" textLength="40.14" lengthAdjust="spacingAndGlyphs">Checked</text>
<path d="M1134.50 253.00h5.1l-2.55 4.6z" fill="#266643"/>
<text x="1149.30" y="258.10" fill="#ffffff" textLength="9.69" lengthAdjust="spacingAndGlyphs">to</text>
<path d="M1171.50 243.90H1215.31V264.30H1171.50V257.50c0,-6.83 -5.46,5.46 -5.46,-5.12s5.46,1.71 5.46,-5.12v-3.4z" fill="#415e24" transform="translate(0.7 0.7)"/>
<path d="M1171.50 243.90H1215.31V264.30H1171.50V257.50c0,-6.83 -5.46,5.46 -5.46,-5.12s5.46,1.71 5.46,-5.12v-3.4z" fill="#77ab41"/>
<path d="M1214.91 244.30H1171.90" stroke="#a3c67e" stroke-width="1" fill="none"/>
<path d="M1171.90 257.50V263.90" stroke="#a3c67e" stroke-width="1" fill="none"/>
<path d="M1171.70 257.50c0,-6.83 -5.46,5.46 -5.46,-5.12" stroke="#a3c67e" stroke-width="0.7" fill="none" opacity=".8"/>
<rect x="1175.30" y="247.40" width="36.01" height="13.7" rx="2.7" fill="#c9ddb3"/>
<text x="1178.80" y="258.10" fill="#000000" textLength="22.11" lengthAdjust="spacingAndGlyphs">false</text>
<path d="M1203.01 253.00h5.1l-2.55 4.6z" fill="#77ab41"/>
<path d="M977.40 265.03H987.60l4.1,2.7 2,0 4.1,-2.7H1213.90V286.16H997.80l-4.1,2.7 -2,0 -4.1,-2.7H977.40z" fill="#153825" transform="translate(0.7 0.7)"/>
<path d="M977.40 265.03H987.60l4.1,2.7 2,0 4.1,-2.7H1213.90V286.16H997.80l-4.1,2.7 -2,0 -4.1,-2.7H977.40z" fill="#266643"/>
<path d="M1213.50 265.43H997.80l-4.1,2.7 -2,0 -4.1,-2.7H977.80V285.76" stroke="#6b977f" stroke-width="1" fill="none"/>
<text x="984.25" y="279.23" fill="#ffffff" textLength="14.06" lengthAdjust="spacingAndGlyphs">set</text>
<rect x="1003.80" y="268.53" width="117.46" height="13.7" rx="2.7" fill="#a8c2b4"/>
<text x="1007.30" y="279.23" fill="#000000" textLength="103.56" lengthAdjust="spacingAndGlyphs">CheckBox_HealthCard</text>
<path d="M1112.96 274.13h5.1l-2.55 4.6z" fill="#266643"/>
<text x="1126.16" y="279.23" fill="#ffffff" textLength="2.69" lengthAdjust="spacingAndGlyphs">.</text>
<rect x="1131.16" y="268.53" width="54.04" height="13.7" rx="2.7" fill="#a8c2b4"/>
<text x="1134.66" y="279.23" fill="#000000" textLength="40.14" lengthAdjust="spacingAndGlyphs">Checked</text>
<path d="M1176.90 274.13h5.1l-2.55 4.6z" fill="#266643"/>
<text x="1191.70" y="279.23" fill="#ffffff" textLength="9.69" lengthAdjust="spacingAndGlyphs">to</text>
<path d="M1213.90 265.03H1257.71V285.43H1213.90V278.63c0,-6.83 -5.46,5.46 -5.46,-5.12s5.46,1.71 5.46,-5.12v-3.4z" fill="#415e24" transform="translate(0.7 0.7)"/>
<path d="M1213.90 265.03H1257.71V285.43H1213.90V278.63c0,-6.83 -5.46,5.46 -5.46,-5.12s5.46,1.71 5.46,-5.12v-3.4z" fill="#77ab41"/>
<path d="M1257.31 265.43H1214.30" stroke="#a3c67e" stroke-width="1" fill="none"/>
<path d="M1214.30 278.63V285.03" stroke="#a3c67e" stroke-width="1" fill="none"/>
<path d="M1214.10 278.63c0,-6.83 -5.46,5.46 -5.46,-5.12" stroke="#a3c67e" stroke-width="0.7" fill="none" opacity=".8"/>
<rect x="1217.70" y="268.53" width="36.01" height="13.7" rx="2.7" fill="#c9ddb3"/>
<text x="1221.20" y="279.23" fill="#000000" textLength="22.11" lengthAdjust="spacingAndGlyphs">false</text>
<path d="M1245.41 274.13h5.1l-2.55 4.6z" fill="#77ab41"/>
<path d="M977.40 286.16H987.60l4.1,2.7 2,0 4.1,-2.7H1207.56V307.29H997.80l-4.1,2.7 -2,0 -4.1,-2.7H977.40z" fill="#153825" transform="translate(0.7 0.7)"/>
<path d="M977.40 286.16H987.60l4.1,2.7 2,0 4.1,-2.7H1207.56V307.29H997.80l-4.1,2.7 -2,0 -4.1,-2.7H977.40z" fill="#266643"/>
<path d="M1207.16 286.56H997.80l-4.1,2.7 -2,0 -4.1,-2.7H977.80V306.89" stroke="#6b977f" stroke-width="1" fill="none"/>
<text x="984.25" y="300.36" fill="#ffffff" textLength="14.06" lengthAdjust="spacingAndGlyphs">set</text>
<rect x="1003.80" y="289.66" width="111.12" height="13.7" rx="2.7" fill="#a8c2b4"/>
<text x="1007.30" y="300.36" fill="#000000" textLength="97.22" lengthAdjust="spacingAndGlyphs">CheckBox_Insurance</text>
<path d="M1106.62 295.26h5.1l-2.55 4.6z" fill="#266643"/>
<text x="1119.82" y="300.36" fill="#ffffff" textLength="2.69" lengthAdjust="spacingAndGlyphs">.</text>
<rect x="1124.82" y="289.66" width="54.04" height="13.7" rx="2.7" fill="#a8c2b4"/>
<text x="1128.32" y="300.36" fill="#000000" textLength="40.14" lengthAdjust="spacingAndGlyphs">Checked</text>
<path d="M1170.56 295.26h5.1l-2.55 4.6z" fill="#266643"/>
<text x="1185.36" y="300.36" fill="#ffffff" textLength="9.69" lengthAdjust="spacingAndGlyphs">to</text>
<path d="M1207.56 286.16H1251.37V306.56H1207.56V299.76c0,-6.83 -5.46,5.46 -5.46,-5.12s5.46,1.71 5.46,-5.12v-3.4z" fill="#415e24" transform="translate(0.7 0.7)"/>
<path d="M1207.56 286.16H1251.37V306.56H1207.56V299.76c0,-6.83 -5.46,5.46 -5.46,-5.12s5.46,1.71 5.46,-5.12v-3.4z" fill="#77ab41"/>
<path d="M1250.97 286.56H1207.96" stroke="#a3c67e" stroke-width="1" fill="none"/>
<path d="M1207.96 299.76V306.16" stroke="#a3c67e" stroke-width="1" fill="none"/>
<path d="M1207.76 299.76c0,-6.83 -5.46,5.46 -5.46,-5.12" stroke="#a3c67e" stroke-width="0.7" fill="none" opacity=".8"/>
<rect x="1211.36" y="289.66" width="36.01" height="13.7" rx="2.7" fill="#c9ddb3"/>
<text x="1214.86" y="300.36" fill="#000000" textLength="22.11" lengthAdjust="spacingAndGlyphs">false</text>
<path d="M1239.07 295.26h5.1l-2.55 4.6z" fill="#77ab41"/>
<path d="M977.40 307.29H987.60l4.1,2.7 2,0 4.1,-2.7H1183.73V328.42H997.80l-4.1,2.7 -2,0 -4.1,-2.7H977.40z" fill="#153825" transform="translate(0.7 0.7)"/>
<path d="M977.40 307.29H987.60l4.1,2.7 2,0 4.1,-2.7H1183.73V328.42H997.80l-4.1,2.7 -2,0 -4.1,-2.7H977.40z" fill="#266643"/>
<path d="M1183.33 307.69H997.80l-4.1,2.7 -2,0 -4.1,-2.7H977.80V328.02" stroke="#6b977f" stroke-width="1" fill="none"/>
<text x="984.25" y="321.49" fill="#ffffff" textLength="14.06" lengthAdjust="spacingAndGlyphs">set</text>
<rect x="1003.80" y="310.79" width="87.29" height="13.7" rx="2.7" fill="#a8c2b4"/>
<text x="1007.30" y="321.49" fill="#000000" textLength="73.39" lengthAdjust="spacingAndGlyphs">CheckBox_Cash</text>
<path d="M1082.79 316.39h5.1l-2.55 4.6z" fill="#266643"/>
<text x="1095.99" y="321.49" fill="#ffffff" textLength="2.69" lengthAdjust="spacingAndGlyphs">.</text>
<rect x="1100.99" y="310.79" width="54.04" height="13.7" rx="2.7" fill="#a8c2b4"/>
<text x="1104.49" y="321.49" fill="#000000" textLength="40.14" lengthAdjust="spacingAndGlyphs">Checked</text>
<path d="M1146.73 316.39h5.1l-2.55 4.6z" fill="#266643"/>
<text x="1161.53" y="321.49" fill="#ffffff" textLength="9.69" lengthAdjust="spacingAndGlyphs">to</text>
<path d="M1183.73 307.29H1227.54V327.69H1183.73V320.89c0,-6.83 -5.46,5.46 -5.46,-5.12s5.46,1.71 5.46,-5.12v-3.4z" fill="#415e24" transform="translate(0.7 0.7)"/>
<path d="M1183.73 307.29H1227.54V327.69H1183.73V320.89c0,-6.83 -5.46,5.46 -5.46,-5.12s5.46,1.71 5.46,-5.12v-3.4z" fill="#77ab41"/>
<path d="M1227.14 307.69H1184.13" stroke="#a3c67e" stroke-width="1" fill="none"/>
<path d="M1184.13 320.89V327.29" stroke="#a3c67e" stroke-width="1" fill="none"/>
<path d="M1183.93 320.89c0,-6.83 -5.46,5.46 -5.46,-5.12" stroke="#a3c67e" stroke-width="0.7" fill="none" opacity=".8"/>
<rect x="1187.53" y="310.79" width="36.01" height="13.7" rx="2.7" fill="#c9ddb3"/>
<text x="1191.03" y="321.49" fill="#000000" textLength="22.11" lengthAdjust="spacingAndGlyphs">false</text>
<path d="M1215.24 316.39h5.1l-2.55 4.6z" fill="#77ab41"/>
<path d="M977.40 328.42H987.60l4.1,2.7 2,0 4.1,-2.7H1182.34V349.55H997.80l-4.1,2.7 -2,0 -4.1,-2.7H977.40z" fill="#153825" transform="translate(0.7 0.7)"/>
<path d="M977.40 328.42H987.60l4.1,2.7 2,0 4.1,-2.7H1182.34V349.55H997.80l-4.1,2.7 -2,0 -4.1,-2.7H977.40z" fill="#266643"/>
<path d="M1181.94 328.82H997.80l-4.1,2.7 -2,0 -4.1,-2.7H977.80V349.15" stroke="#6b977f" stroke-width="1" fill="none"/>
<text x="984.25" y="342.62" fill="#ffffff" textLength="14.06" lengthAdjust="spacingAndGlyphs">set</text>
<rect x="1003.80" y="331.92" width="85.90" height="13.7" rx="2.7" fill="#a8c2b4"/>
<text x="1007.30" y="342.62" fill="#000000" textLength="72.00" lengthAdjust="spacingAndGlyphs">CheckBox_Keys</text>
<path d="M1081.40 337.52h5.1l-2.55 4.6z" fill="#266643"/>
<text x="1094.60" y="342.62" fill="#ffffff" textLength="2.69" lengthAdjust="spacingAndGlyphs">.</text>
<rect x="1099.60" y="331.92" width="54.04" height="13.7" rx="2.7" fill="#a8c2b4"/>
<text x="1103.10" y="342.62" fill="#000000" textLength="40.14" lengthAdjust="spacingAndGlyphs">Checked</text>
<path d="M1145.34 337.52h5.1l-2.55 4.6z" fill="#266643"/>
<text x="1160.14" y="342.62" fill="#ffffff" textLength="9.69" lengthAdjust="spacingAndGlyphs">to</text>
<path d="M1182.34 328.42H1226.15V348.82H1182.34V342.02c0,-6.83 -5.46,5.46 -5.46,-5.12s5.46,1.71 5.46,-5.12v-3.4z" fill="#415e24" transform="translate(0.7 0.7)"/>
<path d="M1182.34 328.42H1226.15V348.82H1182.34V342.02c0,-6.83 -5.46,5.46 -5.46,-5.12s5.46,1.71 5.46,-5.12v-3.4z" fill="#77ab41"/>
<path d="M1225.75 328.82H1182.74" stroke="#a3c67e" stroke-width="1" fill="none"/>
<path d="M1182.74 342.02V348.42" stroke="#a3c67e" stroke-width="1" fill="none"/>
<path d="M1182.54 342.02c0,-6.83 -5.46,5.46 -5.46,-5.12" stroke="#a3c67e" stroke-width="0.7" fill="none" opacity=".8"/>
<rect x="1186.14" y="331.92" width="36.01" height="13.7" rx="2.7" fill="#c9ddb3"/>
<text x="1189.64" y="342.62" fill="#000000" textLength="22.11" lengthAdjust="spacingAndGlyphs">false</text>
<path d="M1213.85 337.52h5.1l-2.55 4.6z" fill="#77ab41"/>
<path d="M977.40 349.55H987.60l4.1,2.7 2,0 4.1,-2.7H1190.93V370.68H997.80l-4.1,2.7 -2,0 -4.1,-2.7H977.40z" fill="#153825" transform="translate(0.7 0.7)"/>
<path d="M977.40 349.55H987.60l4.1,2.7 2,0 4.1,-2.7H1190.93V370.68H997.80l-4.1,2.7 -2,0 -4.1,-2.7H977.40z" fill="#266643"/>
<path d="M1190.53 349.95H997.80l-4.1,2.7 -2,0 -4.1,-2.7H977.80V370.28" stroke="#6b977f" stroke-width="1" fill="none"/>
<text x="984.25" y="363.75" fill="#ffffff" textLength="14.06" lengthAdjust="spacingAndGlyphs">set</text>
<rect x="1003.80" y="353.05" width="94.49" height="13.7" rx="2.7" fill="#a8c2b4"/>
<text x="1007.30" y="363.75" fill="#000000" textLength="80.59" lengthAdjust="spacingAndGlyphs">CheckBox_Phone</text>
<path d="M1089.99 358.65h5.1l-2.55 4.6z" fill="#266643"/>
<text x="1103.19" y="363.75" fill="#ffffff" textLength="2.69" lengthAdjust="spacingAndGlyphs">.</text>
<rect x="1108.19" y="353.05" width="54.04" height="13.7" rx="2.7" fill="#a8c2b4"/>
<text x="1111.69" y="363.75" fill="#000000" textLength="40.14" lengthAdjust="spacingAndGlyphs">Checked</text>
<path d="M1153.93 358.65h5.1l-2.55 4.6z" fill="#266643"/>
<text x="1168.73" y="363.75" fill="#ffffff" textLength="9.69" lengthAdjust="spacingAndGlyphs">to</text>
<path d="M1190.93 349.55H1234.74V369.95H1190.93V363.15c0,-6.83 -5.46,5.46 -5.46,-5.12s5.46,1.71 5.46,-5.12v-3.4z" fill="#415e24" transform="translate(0.7 0.7)"/>
<path d="M1190.93 349.55H1234.74V369.95H1190.93V363.15c0,-6.83 -5.46,5.46 -5.46,-5.12s5.46,1.71 5.46,-5.12v-3.4z" fill="#77ab41"/>
<path d="M1234.34 349.95H1191.33" stroke="#a3c67e" stroke-width="1" fill="none"/>
<path d="M1191.33 363.15V369.55" stroke="#a3c67e" stroke-width="1" fill="none"/>
<path d="M1191.13 363.15c0,-6.83 -5.46,5.46 -5.46,-5.12" stroke="#a3c67e" stroke-width="0.7" fill="none" opacity=".8"/>
<rect x="1194.73" y="353.05" width="36.01" height="13.7" rx="2.7" fill="#c9ddb3"/>
<text x="1198.23" y="363.75" fill="#000000" textLength="22.11" lengthAdjust="spacingAndGlyphs">false</text>
<path d="M1222.44 358.65h5.1l-2.55 4.6z" fill="#77ab41"/>
<path d="M977.40 370.68H987.60l4.1,2.7 2,0 4.1,-2.7H1198.90V391.81H997.80l-4.1,2.7 -2,0 -4.1,-2.7H977.40z" fill="#153825" transform="translate(0.7 0.7)"/>
<path d="M977.40 370.68H987.60l4.1,2.7 2,0 4.1,-2.7H1198.90V391.81H997.80l-4.1,2.7 -2,0 -4.1,-2.7H977.40z" fill="#266643"/>
<path d="M1198.50 371.08H997.80l-4.1,2.7 -2,0 -4.1,-2.7H977.80V391.41" stroke="#6b977f" stroke-width="1" fill="none"/>
<text x="984.25" y="384.88" fill="#ffffff" textLength="14.06" lengthAdjust="spacingAndGlyphs">set</text>
<rect x="1003.80" y="374.18" width="102.46" height="13.7" rx="2.7" fill="#a8c2b4"/>
<text x="1007.30" y="384.88" fill="#000000" textLength="88.56" lengthAdjust="spacingAndGlyphs">CheckBox_Charger</text>
<path d="M1097.96 379.78h5.1l-2.55 4.6z" fill="#266643"/>
<text x="1111.16" y="384.88" fill="#ffffff" textLength="2.69" lengthAdjust="spacingAndGlyphs">.</text>
<rect x="1116.16" y="374.18" width="54.04" height="13.7" rx="2.7" fill="#a8c2b4"/>
<text x="1119.66" y="384.88" fill="#000000" textLength="40.14" lengthAdjust="spacingAndGlyphs">Checked</text>
<path d="M1161.90 379.78h5.1l-2.55 4.6z" fill="#266643"/>
<text x="1176.70" y="384.88" fill="#ffffff" textLength="9.69" lengthAdjust="spacingAndGlyphs">to</text>
<path d="M1198.90 370.68H1242.71V391.08H1198.90V384.28c0,-6.83 -5.46,5.46 -5.46,-5.12s5.46,1.71 5.46,-5.12v-3.4z" fill="#415e24" transform="translate(0.7 0.7)"/>
<path d="M1198.90 370.68H1242.71V391.08H1198.90V384.28c0,-6.83 -5.46,5.46 -5.46,-5.12s5.46,1.71 5.46,-5.12v-3.4z" fill="#77ab41"/>
<path d="M1242.31 371.08H1199.30" stroke="#a3c67e" stroke-width="1" fill="none"/>
<path d="M1199.30 384.28V390.68" stroke="#a3c67e" stroke-width="1" fill="none"/>
<path d="M1199.10 384.28c0,-6.83 -5.46,5.46 -5.46,-5.12" stroke="#a3c67e" stroke-width="0.7" fill="none" opacity=".8"/>
<rect x="1202.70" y="374.18" width="36.01" height="13.7" rx="2.7" fill="#c9ddb3"/>
<text x="1206.20" y="384.88" fill="#000000" textLength="22.11" lengthAdjust="spacingAndGlyphs">false</text>
<path d="M1230.41 379.78h5.1l-2.55 4.6z" fill="#77ab41"/>
<path d="M977.40 391.81H987.60l4.1,2.7 2,0 4.1,-2.7H1213.68V412.94H997.80l-4.1,2.7 -2,0 -4.1,-2.7H977.40z" fill="#153825" transform="translate(0.7 0.7)"/>
<path d="M977.40 391.81H987.60l4.1,2.7 2,0 4.1,-2.7H1213.68V412.94H997.80l-4.1,2.7 -2,0 -4.1,-2.7H977.40z" fill="#266643"/>
<path d="M1213.28 392.21H997.80l-4.1,2.7 -2,0 -4.1,-2.7H977.80V412.54" stroke="#6b977f" stroke-width="1" fill="none"/>
<text x="984.25" y="406.01" fill="#ffffff" textLength="14.06" lengthAdjust="spacingAndGlyphs">set</text>
<rect x="1003.80" y="395.31" width="117.24" height="13.7" rx="2.7" fill="#a8c2b4"/>
<text x="1007.30" y="406.01" fill="#000000" textLength="103.34" lengthAdjust="spacingAndGlyphs">CheckBox_Powerbank</text>
<path d="M1112.74 400.91h5.1l-2.55 4.6z" fill="#266643"/>
<text x="1125.94" y="406.01" fill="#ffffff" textLength="2.69" lengthAdjust="spacingAndGlyphs">.</text>
<rect x="1130.94" y="395.31" width="54.04" height="13.7" rx="2.7" fill="#a8c2b4"/>
<text x="1134.44" y="406.01" fill="#000000" textLength="40.14" lengthAdjust="spacingAndGlyphs">Checked</text>
<path d="M1176.68 400.91h5.1l-2.55 4.6z" fill="#266643"/>
<text x="1191.48" y="406.01" fill="#ffffff" textLength="9.69" lengthAdjust="spacingAndGlyphs">to</text>
<path d="M1213.68 391.81H1257.49V412.21H1213.68V405.41c0,-6.83 -5.46,5.46 -5.46,-5.12s5.46,1.71 5.46,-5.12v-3.4z" fill="#415e24" transform="translate(0.7 0.7)"/>
<path d="M1213.68 391.81H1257.49V412.21H1213.68V405.41c0,-6.83 -5.46,5.46 -5.46,-5.12s5.46,1.71 5.46,-5.12v-3.4z" fill="#77ab41"/>
<path d="M1257.09 392.21H1214.08" stroke="#a3c67e" stroke-width="1" fill="none"/>
<path d="M1214.08 405.41V411.81" stroke="#a3c67e" stroke-width="1" fill="none"/>
<path d="M1213.88 405.41c0,-6.83 -5.46,5.46 -5.46,-5.12" stroke="#a3c67e" stroke-width="0.7" fill="none" opacity=".8"/>
<rect x="1217.48" y="395.31" width="36.01" height="13.7" rx="2.7" fill="#c9ddb3"/>
<text x="1220.98" y="406.01" fill="#000000" textLength="22.11" lengthAdjust="spacingAndGlyphs">false</text>
<path d="M1245.19 400.91h5.1l-2.55 4.6z" fill="#77ab41"/>
<path d="M977.40 412.94H987.60l4.1,2.7 2,0 4.1,-2.7H1187.43V434.07H997.80l-4.1,2.7 -2,0 -4.1,-2.7H977.40z" fill="#153825" transform="translate(0.7 0.7)"/>
<path d="M977.40 412.94H987.60l4.1,2.7 2,0 4.1,-2.7H1187.43V434.07H997.80l-4.1,2.7 -2,0 -4.1,-2.7H977.40z" fill="#266643"/>
<path d="M1187.03 413.34H997.80l-4.1,2.7 -2,0 -4.1,-2.7H977.80V433.67" stroke="#6b977f" stroke-width="1" fill="none"/>
<text x="984.25" y="427.14" fill="#ffffff" textLength="14.06" lengthAdjust="spacingAndGlyphs">set</text>
<rect x="1003.80" y="416.44" width="90.99" height="13.7" rx="2.7" fill="#a8c2b4"/>
<text x="1007.30" y="427.14" fill="#000000" textLength="77.09" lengthAdjust="spacingAndGlyphs">CheckBox_Radio</text>
<path d="M1086.49 422.04h5.1l-2.55 4.6z" fill="#266643"/>
<text x="1099.69" y="427.14" fill="#ffffff" textLength="2.69" lengthAdjust="spacingAndGlyphs">.</text>
<rect x="1104.69" y="416.44" width="54.04" height="13.7" rx="2.7" fill="#a8c2b4"/>
<text x="1108.19" y="427.14" fill="#000000" textLength="40.14" lengthAdjust="spacingAndGlyphs">Checked</text>
<path d="M1150.43 422.04h5.1l-2.55 4.6z" fill="#266643"/>
<text x="1165.23" y="427.14" fill="#ffffff" textLength="9.69" lengthAdjust="spacingAndGlyphs">to</text>
<path d="M1187.43 412.94H1231.24V433.34H1187.43V426.54c0,-6.83 -5.46,5.46 -5.46,-5.12s5.46,1.71 5.46,-5.12v-3.4z" fill="#415e24" transform="translate(0.7 0.7)"/>
<path d="M1187.43 412.94H1231.24V433.34H1187.43V426.54c0,-6.83 -5.46,5.46 -5.46,-5.12s5.46,1.71 5.46,-5.12v-3.4z" fill="#77ab41"/>
<path d="M1230.84 413.34H1187.83" stroke="#a3c67e" stroke-width="1" fill="none"/>
<path d="M1187.83 426.54V432.94" stroke="#a3c67e" stroke-width="1" fill="none"/>
<path d="M1187.63 426.54c0,-6.83 -5.46,5.46 -5.46,-5.12" stroke="#a3c67e" stroke-width="0.7" fill="none" opacity=".8"/>
<rect x="1191.23" y="416.44" width="36.01" height="13.7" rx="2.7" fill="#c9ddb3"/>
<text x="1194.73" y="427.14" fill="#000000" textLength="22.11" lengthAdjust="spacingAndGlyphs">false</text>
<path d="M1218.94 422.04h5.1l-2.55 4.6z" fill="#77ab41"/>
<path d="M977.40 434.07H987.60l4.1,2.7 2,0 4.1,-2.7H1201.83V455.20H997.80l-4.1,2.7 -2,0 -4.1,-2.7H977.40z" fill="#153825" transform="translate(0.7 0.7)"/>
<path d="M977.40 434.07H987.60l4.1,2.7 2,0 4.1,-2.7H1201.83V455.20H997.80l-4.1,2.7 -2,0 -4.1,-2.7H977.40z" fill="#266643"/>
<path d="M1201.43 434.47H997.80l-4.1,2.7 -2,0 -4.1,-2.7H977.80V454.80" stroke="#6b977f" stroke-width="1" fill="none"/>
<text x="984.25" y="448.27" fill="#ffffff" textLength="14.06" lengthAdjust="spacingAndGlyphs">set</text>
<rect x="1003.80" y="437.57" width="105.38" height="13.7" rx="2.7" fill="#a8c2b4"/>
<text x="1007.30" y="448.27" fill="#000000" textLength="91.48" lengthAdjust="spacingAndGlyphs">CheckBox_Contacts</text>
<path d="M1100.88 443.17h5.1l-2.55 4.6z" fill="#266643"/>
<text x="1114.08" y="448.27" fill="#ffffff" textLength="2.69" lengthAdjust="spacingAndGlyphs">.</text>
<rect x="1119.08" y="437.57" width="54.04" height="13.7" rx="2.7" fill="#a8c2b4"/>
<text x="1122.58" y="448.27" fill="#000000" textLength="40.14" lengthAdjust="spacingAndGlyphs">Checked</text>
<path d="M1164.83 443.17h5.1l-2.55 4.6z" fill="#266643"/>
<text x="1179.63" y="448.27" fill="#ffffff" textLength="9.69" lengthAdjust="spacingAndGlyphs">to</text>
<path d="M1201.83 434.07H1245.63V454.47H1201.83V447.67c0,-6.83 -5.46,5.46 -5.46,-5.12s5.46,1.71 5.46,-5.12v-3.4z" fill="#415e24" transform="translate(0.7 0.7)"/>
<path d="M1201.83 434.07H1245.63V454.47H1201.83V447.67c0,-6.83 -5.46,5.46 -5.46,-5.12s5.46,1.71 5.46,-5.12v-3.4z" fill="#77ab41"/>
<path d="M1245.23 434.47H1202.23" stroke="#a3c67e" stroke-width="1" fill="none"/>
<path d="M1202.23 447.67V454.07" stroke="#a3c67e" stroke-width="1" fill="none"/>
<path d="M1202.03 447.67c0,-6.83 -5.46,5.46 -5.46,-5.12" stroke="#a3c67e" stroke-width="0.7" fill="none" opacity=".8"/>
<rect x="1205.63" y="437.57" width="36.01" height="13.7" rx="2.7" fill="#c9ddb3"/>
<text x="1209.13" y="448.27" fill="#000000" textLength="22.11" lengthAdjust="spacingAndGlyphs">false</text>
<path d="M1233.33 443.17h5.1l-2.55 4.6z" fill="#77ab41"/>
<path d="M977.40 455.20H987.60l4.1,2.7 2,0 4.1,-2.7H1188.92V476.33H997.80l-4.1,2.7 -2,0 -4.1,-2.7H977.40z" fill="#153825" transform="translate(0.7 0.7)"/>
<path d="M977.40 455.20H987.60l4.1,2.7 2,0 4.1,-2.7H1188.92V476.33H997.80l-4.1,2.7 -2,0 -4.1,-2.7H977.40z" fill="#266643"/>
<path d="M1188.52 455.60H997.80l-4.1,2.7 -2,0 -4.1,-2.7H977.80V475.93" stroke="#6b977f" stroke-width="1" fill="none"/>
<text x="984.25" y="469.40" fill="#ffffff" textLength="14.06" lengthAdjust="spacingAndGlyphs">set</text>
<rect x="1003.80" y="458.70" width="92.48" height="13.7" rx="2.7" fill="#a8c2b4"/>
<text x="1007.30" y="469.40" fill="#000000" textLength="78.58" lengthAdjust="spacingAndGlyphs">CheckBox_Water</text>
<path d="M1087.98 464.30h5.1l-2.55 4.6z" fill="#266643"/>
<text x="1101.18" y="469.40" fill="#ffffff" textLength="2.69" lengthAdjust="spacingAndGlyphs">.</text>
<rect x="1106.18" y="458.70" width="54.04" height="13.7" rx="2.7" fill="#a8c2b4"/>
<text x="1109.68" y="469.40" fill="#000000" textLength="40.14" lengthAdjust="spacingAndGlyphs">Checked</text>
<path d="M1151.92 464.30h5.1l-2.55 4.6z" fill="#266643"/>
<text x="1166.72" y="469.40" fill="#ffffff" textLength="9.69" lengthAdjust="spacingAndGlyphs">to</text>
<path d="M1188.92 455.20H1232.73V475.60H1188.92V468.80c0,-6.83 -5.46,5.46 -5.46,-5.12s5.46,1.71 5.46,-5.12v-3.4z" fill="#415e24" transform="translate(0.7 0.7)"/>
<path d="M1188.92 455.20H1232.73V475.60H1188.92V468.80c0,-6.83 -5.46,5.46 -5.46,-5.12s5.46,1.71 5.46,-5.12v-3.4z" fill="#77ab41"/>
<path d="M1232.33 455.60H1189.32" stroke="#a3c67e" stroke-width="1" fill="none"/>
<path d="M1189.32 468.80V475.20" stroke="#a3c67e" stroke-width="1" fill="none"/>
<path d="M1189.12 468.80c0,-6.83 -5.46,5.46 -5.46,-5.12" stroke="#a3c67e" stroke-width="0.7" fill="none" opacity=".8"/>
<rect x="1192.72" y="458.70" width="36.01" height="13.7" rx="2.7" fill="#c9ddb3"/>
<text x="1196.22" y="469.40" fill="#000000" textLength="22.11" lengthAdjust="spacingAndGlyphs">false</text>
<path d="M1220.43 464.30h5.1l-2.55 4.6z" fill="#77ab41"/>
<path d="M977.40 476.33H987.60l4.1,2.7 2,0 4.1,-2.7H1184.26V497.46H997.80l-4.1,2.7 -2,0 -4.1,-2.7H977.40z" fill="#153825" transform="translate(0.7 0.7)"/>
<path d="M977.40 476.33H987.60l4.1,2.7 2,0 4.1,-2.7H1184.26V497.46H997.80l-4.1,2.7 -2,0 -4.1,-2.7H977.40z" fill="#266643"/>
<path d="M1183.86 476.73H997.80l-4.1,2.7 -2,0 -4.1,-2.7H977.80V497.06" stroke="#6b977f" stroke-width="1" fill="none"/>
<text x="984.25" y="490.53" fill="#ffffff" textLength="14.06" lengthAdjust="spacingAndGlyphs">set</text>
<rect x="1003.80" y="479.83" width="87.82" height="13.7" rx="2.7" fill="#a8c2b4"/>
<text x="1007.30" y="490.53" fill="#000000" textLength="73.92" lengthAdjust="spacingAndGlyphs">CheckBox_Food</text>
<path d="M1083.32 485.43h5.1l-2.55 4.6z" fill="#266643"/>
<text x="1096.52" y="490.53" fill="#ffffff" textLength="2.69" lengthAdjust="spacingAndGlyphs">.</text>
<rect x="1101.52" y="479.83" width="54.04" height="13.7" rx="2.7" fill="#a8c2b4"/>
<text x="1105.02" y="490.53" fill="#000000" textLength="40.14" lengthAdjust="spacingAndGlyphs">Checked</text>
<path d="M1147.26 485.43h5.1l-2.55 4.6z" fill="#266643"/>
<text x="1162.06" y="490.53" fill="#ffffff" textLength="9.69" lengthAdjust="spacingAndGlyphs">to</text>
<path d="M1184.26 476.33H1228.07V496.73H1184.26V489.93c0,-6.83 -5.46,5.46 -5.46,-5.12s5.46,1.71 5.46,-5.12v-3.4z" fill="#415e24" transform="translate(0.7 0.7)"/>
<path d="M1184.26 476.33H1228.07V496.73H1184.26V489.93c0,-6.83 -5.46,5.46 -5.46,-5.12s5.46,1.71 5.46,-5.12v-3.4z" fill="#77ab41"/>
<path d="M1227.67 476.73H1184.66" stroke="#a3c67e" stroke-width="1" fill="none"/>
<path d="M1184.66 489.93V496.33" stroke="#a3c67e" stroke-width="1" fill="none"/>
<path d="M1184.46 489.93c0,-6.83 -5.46,5.46 -5.46,-5.12" stroke="#a3c67e" stroke-width="0.7" fill="none" opacity=".8"/>
<rect x="1188.06" y="479.83" width="36.01" height="13.7" rx="2.7" fill="#c9ddb3"/>
<text x="1191.56" y="490.53" fill="#000000" textLength="22.11" lengthAdjust="spacingAndGlyphs">false</text>
<path d="M1215.77 485.43h5.1l-2.55 4.6z" fill="#77ab41"/>
<path d="M977.40 497.46H987.60l4.1,2.7 2,0 4.1,-2.7H1179.47V518.59H997.80l-4.1,2.7 -2,0 -4.1,-2.7H977.40z" fill="#153825" transform="translate(0.7 0.7)"/>
<path d="M977.40 497.46H987.60l4.1,2.7 2,0 4.1,-2.7H1179.47V518.59H997.80l-4.1,2.7 -2,0 -4.1,-2.7H977.40z" fill="#266643"/>
<path d="M1179.07 497.86H997.80l-4.1,2.7 -2,0 -4.1,-2.7H977.80V518.19" stroke="#6b977f" stroke-width="1" fill="none"/>
<text x="984.25" y="511.66" fill="#ffffff" textLength="14.06" lengthAdjust="spacingAndGlyphs">set</text>
<rect x="1003.80" y="500.96" width="83.03" height="13.7" rx="2.7" fill="#a8c2b4"/>
<text x="1007.30" y="511.66" fill="#000000" textLength="69.12" lengthAdjust="spacingAndGlyphs">CheckBox_Cup</text>
<path d="M1078.52 506.56h5.1l-2.55 4.6z" fill="#266643"/>
<text x="1091.73" y="511.66" fill="#ffffff" textLength="2.69" lengthAdjust="spacingAndGlyphs">.</text>
<rect x="1096.73" y="500.96" width="54.04" height="13.7" rx="2.7" fill="#a8c2b4"/>
<text x="1100.23" y="511.66" fill="#000000" textLength="40.14" lengthAdjust="spacingAndGlyphs">Checked</text>
<path d="M1142.47 506.56h5.1l-2.55 4.6z" fill="#266643"/>
<text x="1157.27" y="511.66" fill="#ffffff" textLength="9.69" lengthAdjust="spacingAndGlyphs">to</text>
<path d="M1179.47 497.46H1223.28V517.86H1179.47V511.06c0,-6.83 -5.46,5.46 -5.46,-5.12s5.46,1.71 5.46,-5.12v-3.4z" fill="#415e24" transform="translate(0.7 0.7)"/>
<path d="M1179.47 497.46H1223.28V517.86H1179.47V511.06c0,-6.83 -5.46,5.46 -5.46,-5.12s5.46,1.71 5.46,-5.12v-3.4z" fill="#77ab41"/>
<path d="M1222.88 497.86H1179.87" stroke="#a3c67e" stroke-width="1" fill="none"/>
<path d="M1179.87 511.06V517.46" stroke="#a3c67e" stroke-width="1" fill="none"/>
<path d="M1179.67 511.06c0,-6.83 -5.46,5.46 -5.46,-5.12" stroke="#a3c67e" stroke-width="0.7" fill="none" opacity=".8"/>
<rect x="1183.27" y="500.96" width="36.01" height="13.7" rx="2.7" fill="#c9ddb3"/>
<text x="1186.77" y="511.66" fill="#000000" textLength="22.11" lengthAdjust="spacingAndGlyphs">false</text>
<path d="M1210.98 506.56h5.1l-2.55 4.6z" fill="#77ab41"/>
<path d="M977.40 518.59H987.60l4.1,2.7 2,0 4.1,-2.7H1186.48V539.72H997.80l-4.1,2.7 -2,0 -4.1,-2.7H977.40z" fill="#153825" transform="translate(0.7 0.7)"/>
<path d="M977.40 518.59H987.60l4.1,2.7 2,0 4.1,-2.7H1186.48V539.72H997.80l-4.1,2.7 -2,0 -4.1,-2.7H977.40z" fill="#266643"/>
<path d="M1186.08 518.99H997.80l-4.1,2.7 -2,0 -4.1,-2.7H977.80V539.32" stroke="#6b977f" stroke-width="1" fill="none"/>
<text x="984.25" y="532.79" fill="#ffffff" textLength="14.06" lengthAdjust="spacingAndGlyphs">set</text>
<rect x="1003.80" y="522.09" width="90.04" height="13.7" rx="2.7" fill="#a8c2b4"/>
<text x="1007.30" y="532.79" fill="#000000" textLength="76.14" lengthAdjust="spacingAndGlyphs">CheckBox_Meds</text>
<path d="M1085.54 527.69h5.1l-2.55 4.6z" fill="#266643"/>
<text x="1098.74" y="532.79" fill="#ffffff" textLength="2.69" lengthAdjust="spacingAndGlyphs">.</text>
<rect x="1103.74" y="522.09" width="54.04" height="13.7" rx="2.7" fill="#a8c2b4"/>
<text x="1107.24" y="532.79" fill="#000000" textLength="40.14" lengthAdjust="spacingAndGlyphs">Checked</text>
<path d="M1149.48 527.69h5.1l-2.55 4.6z" fill="#266643"/>
<text x="1164.28" y="532.79" fill="#ffffff" textLength="9.69" lengthAdjust="spacingAndGlyphs">to</text>
<path d="M1186.48 518.59H1230.29V538.99H1186.48V532.19c0,-6.83 -5.46,5.46 -5.46,-5.12s5.46,1.71 5.46,-5.12v-3.4z" fill="#415e24" transform="translate(0.7 0.7)"/>
<path d="M1186.48 518.59H1230.29V538.99H1186.48V532.19c0,-6.83 -5.46,5.46 -5.46,-5.12s5.46,1.71 5.46,-5.12v-3.4z" fill="#77ab41"/>
<path d="M1229.89 518.99H1186.88" stroke="#a3c67e" stroke-width="1" fill="none"/>
<path d="M1186.88 532.19V538.59" stroke="#a3c67e" stroke-width="1" fill="none"/>
<path d="M1186.68 532.19c0,-6.83 -5.46,5.46 -5.46,-5.12" stroke="#a3c67e" stroke-width="0.7" fill="none" opacity=".8"/>
<rect x="1190.28" y="522.09" width="36.01" height="13.7" rx="2.7" fill="#c9ddb3"/>
<text x="1193.78" y="532.79" fill="#000000" textLength="22.11" lengthAdjust="spacingAndGlyphs">false</text>
<path d="M1217.99 527.69h5.1l-2.55 4.6z" fill="#77ab41"/>
<path d="M977.40 539.72H987.60l4.1,2.7 2,0 4.1,-2.7H1208.92V560.85H997.80l-4.1,2.7 -2,0 -4.1,-2.7H977.40z" fill="#153825" transform="translate(0.7 0.7)"/>
<path d="M977.40 539.72H987.60l4.1,2.7 2,0 4.1,-2.7H1208.92V560.85H997.80l-4.1,2.7 -2,0 -4.1,-2.7H977.40z" fill="#266643"/>
<path d="M1208.52 540.12H997.80l-4.1,2.7 -2,0 -4.1,-2.7H977.80V560.45" stroke="#6b977f" stroke-width="1" fill="none"/>
<text x="984.25" y="553.92" fill="#ffffff" textLength="14.06" lengthAdjust="spacingAndGlyphs">set</text>
<rect x="1003.80" y="543.22" width="112.48" height="13.7" rx="2.7" fill="#a8c2b4"/>
<text x="1007.30" y="553.92" fill="#000000" textLength="98.58" lengthAdjust="spacingAndGlyphs">CheckBox_Painkillers</text>
<path d="M1107.98 548.82h5.1l-2.55 4.6z" fill="#266643"/>
<text x="1121.18" y="553.92" fill="#ffffff" textLength="2.69" lengthAdjust="spacingAndGlyphs">.</text>
<rect x="1126.18" y="543.22" width="54.04" height="13.7" rx="2.7" fill="#a8c2b4"/>
<text x="1129.68" y="553.92" fill="#000000" textLength="40.14" lengthAdjust="spacingAndGlyphs">Checked</text>
<path d="M1171.92 548.82h5.1l-2.55 4.6z" fill="#266643"/>
<text x="1186.72" y="553.92" fill="#ffffff" textLength="9.69" lengthAdjust="spacingAndGlyphs">to</text>
<path d="M1208.92 539.72H1252.73V560.12H1208.92V553.32c0,-6.83 -5.46,5.46 -5.46,-5.12s5.46,1.71 5.46,-5.12v-3.4z" fill="#415e24" transform="translate(0.7 0.7)"/>
<path d="M1208.92 539.72H1252.73V560.12H1208.92V553.32c0,-6.83 -5.46,5.46 -5.46,-5.12s5.46,1.71 5.46,-5.12v-3.4z" fill="#77ab41"/>
<path d="M1252.33 540.12H1209.32" stroke="#a3c67e" stroke-width="1" fill="none"/>
<path d="M1209.32 553.32V559.72" stroke="#a3c67e" stroke-width="1" fill="none"/>
<path d="M1209.12 553.32c0,-6.83 -5.46,5.46 -5.46,-5.12" stroke="#a3c67e" stroke-width="0.7" fill="none" opacity=".8"/>
<rect x="1212.72" y="543.22" width="36.01" height="13.7" rx="2.7" fill="#c9ddb3"/>
<text x="1216.22" y="553.92" fill="#000000" textLength="22.11" lengthAdjust="spacingAndGlyphs">false</text>
<path d="M1240.43 548.82h5.1l-2.55 4.6z" fill="#77ab41"/>
<path d="M977.40 560.85H987.60l4.1,2.7 2,0 4.1,-2.7H1196.26V581.98H997.80l-4.1,2.7 -2,0 -4.1,-2.7H977.40z" fill="#153825" transform="translate(0.7 0.7)"/>
<path d="M977.40 560.85H987.60l4.1,2.7 2,0 4.1,-2.7H1196.26V581.98H997.80l-4.1,2.7 -2,0 -4.1,-2.7H977.40z" fill="#266643"/>
<path d="M1195.86 561.25H997.80l-4.1,2.7 -2,0 -4.1,-2.7H977.80V581.58" stroke="#6b977f" stroke-width="1" fill="none"/>
<text x="984.25" y="575.05" fill="#ffffff" textLength="14.06" lengthAdjust="spacingAndGlyphs">set</text>
<rect x="1003.80" y="564.35" width="99.82" height="13.7" rx="2.7" fill="#a8c2b4"/>
<text x="1007.30" y="575.05" fill="#000000" textLength="85.92" lengthAdjust="spacingAndGlyphs">CheckBox_FirstAid</text>
<path d="M1095.32 569.95h5.1l-2.55 4.6z" fill="#266643"/>
<text x="1108.52" y="575.05" fill="#ffffff" textLength="2.69" lengthAdjust="spacingAndGlyphs">.</text>
<rect x="1113.52" y="564.35" width="54.04" height="13.7" rx="2.7" fill="#a8c2b4"/>
<text x="1117.02" y="575.05" fill="#000000" textLength="40.14" lengthAdjust="spacingAndGlyphs">Checked</text>
<path d="M1159.26 569.95h5.1l-2.55 4.6z" fill="#266643"/>
<text x="1174.06" y="575.05" fill="#ffffff" textLength="9.69" lengthAdjust="spacingAndGlyphs">to</text>
<path d="M1196.26 560.85H1240.07V581.25H1196.26V574.45c0,-6.83 -5.46,5.46 -5.46,-5.12s5.46,1.71 5.46,-5.12v-3.4z" fill="#415e24" transform="translate(0.7 0.7)"/>
<path d="M1196.26 560.85H1240.07V581.25H1196.26V574.45c0,-6.83 -5.46,5.46 -5.46,-5.12s5.46,1.71 5.46,-5.12v-3.4z" fill="#77ab41"/>
<path d="M1239.67 561.25H1196.66" stroke="#a3c67e" stroke-width="1" fill="none"/>
<path d="M1196.66 574.45V580.85" stroke="#a3c67e" stroke-width="1" fill="none"/>
<path d="M1196.46 574.45c0,-6.83 -5.46,5.46 -5.46,-5.12" stroke="#a3c67e" stroke-width="0.7" fill="none" opacity=".8"/>
<rect x="1200.06" y="564.35" width="36.01" height="13.7" rx="2.7" fill="#c9ddb3"/>
<text x="1203.56" y="575.05" fill="#000000" textLength="22.11" lengthAdjust="spacingAndGlyphs">false</text>
<path d="M1227.77 569.95h5.1l-2.55 4.6z" fill="#77ab41"/>
<path d="M977.40 581.98H987.60l4.1,2.7 2,0 4.1,-2.7H1201.37V603.11H997.80l-4.1,2.7 -2,0 -4.1,-2.7H977.40z" fill="#153825" transform="translate(0.7 0.7)"/>
<path d="M977.40 581.98H987.60l4.1,2.7 2,0 4.1,-2.7H1201.37V603.11H997.80l-4.1,2.7 -2,0 -4.1,-2.7H977.40z" fill="#266643"/>
<path d="M1200.97 582.38H997.80l-4.1,2.7 -2,0 -4.1,-2.7H977.80V602.71" stroke="#6b977f" stroke-width="1" fill="none"/>
<text x="984.25" y="596.18" fill="#ffffff" textLength="14.06" lengthAdjust="spacingAndGlyphs">set</text>
<rect x="1003.80" y="585.48" width="104.93" height="13.7" rx="2.7" fill="#a8c2b4"/>
<text x="1007.30" y="596.18" fill="#000000" textLength="91.03" lengthAdjust="spacingAndGlyphs">CheckBox_Sanitizer</text>
<path d="M1100.43 591.08h5.1l-2.55 4.6z" fill="#266643"/>
<text x="1113.63" y="596.18" fill="#ffffff" textLength="2.69" lengthAdjust="spacingAndGlyphs">.</text>
<rect x="1118.63" y="585.48" width="54.04" height="13.7" rx="2.7" fill="#a8c2b4"/>
<text x="1122.13" y="596.18" fill="#000000" textLength="40.14" lengthAdjust="spacingAndGlyphs">Checked</text>
<path d="M1164.37 591.08h5.1l-2.55 4.6z" fill="#266643"/>
<text x="1179.17" y="596.18" fill="#ffffff" textLength="9.69" lengthAdjust="spacingAndGlyphs">to</text>
<path d="M1201.37 581.98H1245.18V602.38H1201.37V595.58c0,-6.83 -5.46,5.46 -5.46,-5.12s5.46,1.71 5.46,-5.12v-3.4z" fill="#415e24" transform="translate(0.7 0.7)"/>
<path d="M1201.37 581.98H1245.18V602.38H1201.37V595.58c0,-6.83 -5.46,5.46 -5.46,-5.12s5.46,1.71 5.46,-5.12v-3.4z" fill="#77ab41"/>
<path d="M1244.78 582.38H1201.77" stroke="#a3c67e" stroke-width="1" fill="none"/>
<path d="M1201.77 595.58V601.98" stroke="#a3c67e" stroke-width="1" fill="none"/>
<path d="M1201.57 595.58c0,-6.83 -5.46,5.46 -5.46,-5.12" stroke="#a3c67e" stroke-width="0.7" fill="none" opacity=".8"/>
<rect x="1205.17" y="585.48" width="36.01" height="13.7" rx="2.7" fill="#c9ddb3"/>
<text x="1208.67" y="596.18" fill="#000000" textLength="22.11" lengthAdjust="spacingAndGlyphs">false</text>
<path d="M1232.88 591.08h5.1l-2.55 4.6z" fill="#77ab41"/>
<path d="M977.40 603.11H987.60l4.1,2.7 2,0 4.1,-2.7H1189.29V624.24H997.80l-4.1,2.7 -2,0 -4.1,-2.7H977.40z" fill="#153825" transform="translate(0.7 0.7)"/>
<path d="M977.40 603.11H987.60l4.1,2.7 2,0 4.1,-2.7H1189.29V624.24H997.80l-4.1,2.7 -2,0 -4.1,-2.7H977.40z" fill="#266643"/>
<path d="M1188.89 603.51H997.80l-4.1,2.7 -2,0 -4.1,-2.7H977.80V623.84" stroke="#6b977f" stroke-width="1" fill="none"/>
<text x="984.25" y="617.31" fill="#ffffff" textLength="14.06" lengthAdjust="spacingAndGlyphs">set</text>
<rect x="1003.80" y="606.61" width="92.85" height="13.7" rx="2.7" fill="#a8c2b4"/>
<text x="1007.30" y="617.31" fill="#000000" textLength="78.95" lengthAdjust="spacingAndGlyphs">CheckBox_Wipes</text>
<path d="M1088.35 612.21h5.1l-2.55 4.6z" fill="#266643"/>
<text x="1101.55" y="617.31" fill="#ffffff" textLength="2.69" lengthAdjust="spacingAndGlyphs">.</text>
<rect x="1106.55" y="606.61" width="54.04" height="13.7" rx="2.7" fill="#a8c2b4"/>
<text x="1110.05" y="617.31" fill="#000000" textLength="40.14" lengthAdjust="spacingAndGlyphs">Checked</text>
<path d="M1152.29 612.21h5.1l-2.55 4.6z" fill="#266643"/>
<text x="1167.09" y="617.31" fill="#ffffff" textLength="9.69" lengthAdjust="spacingAndGlyphs">to</text>
<path d="M1189.29 603.11H1233.10V623.51H1189.29V616.71c0,-6.83 -5.46,5.46 -5.46,-5.12s5.46,1.71 5.46,-5.12v-3.4z" fill="#415e24" transform="translate(0.7 0.7)"/>
<path d="M1189.29 603.11H1233.10V623.51H1189.29V616.71c0,-6.83 -5.46,5.46 -5.46,-5.12s5.46,1.71 5.46,-5.12v-3.4z" fill="#77ab41"/>
<path d="M1232.70 603.51H1189.69" stroke="#a3c67e" stroke-width="1" fill="none"/>
<path d="M1189.69 616.71V623.11" stroke="#a3c67e" stroke-width="1" fill="none"/>
<path d="M1189.49 616.71c0,-6.83 -5.46,5.46 -5.46,-5.12" stroke="#a3c67e" stroke-width="0.7" fill="none" opacity=".8"/>
<rect x="1193.09" y="606.61" width="36.01" height="13.7" rx="2.7" fill="#c9ddb3"/>
<text x="1196.59" y="617.31" fill="#000000" textLength="22.11" lengthAdjust="spacingAndGlyphs">false</text>
<path d="M1220.80 612.21h5.1l-2.55 4.6z" fill="#77ab41"/>
<path d="M977.40 624.24H987.60l4.1,2.7 2,0 4.1,-2.7H1189.51V645.37H997.80l-4.1,2.7 -2,0 -4.1,-2.7H977.40z" fill="#153825" transform="translate(0.7 0.7)"/>
<path d="M977.40 624.24H987.60l4.1,2.7 2,0 4.1,-2.7H1189.51V645.37H997.80l-4.1,2.7 -2,0 -4.1,-2.7H977.40z" fill="#266643"/>
<path d="M1189.11 624.64H997.80l-4.1,2.7 -2,0 -4.1,-2.7H977.80V644.97" stroke="#6b977f" stroke-width="1" fill="none"/>
<text x="984.25" y="638.44" fill="#ffffff" textLength="14.06" lengthAdjust="spacingAndGlyphs">set</text>
<rect x="1003.80" y="627.74" width="93.07" height="13.7" rx="2.7" fill="#a8c2b4"/>
<text x="1007.30" y="638.44" fill="#000000" textLength="79.17" lengthAdjust="spacingAndGlyphs">CheckBox_Jacket</text>
<path d="M1088.57 633.34h5.1l-2.55 4.6z" fill="#266643"/>
<text x="1101.77" y="638.44" fill="#ffffff" textLength="2.69" lengthAdjust="spacingAndGlyphs">.</text>
<rect x="1106.77" y="627.74" width="54.04" height="13.7" rx="2.7" fill="#a8c2b4"/>
<text x="1110.27" y="638.44" fill="#000000" textLength="40.14" lengthAdjust="spacingAndGlyphs">Checked</text>
<path d="M1152.51 633.34h5.1l-2.55 4.6z" fill="#266643"/>
<text x="1167.31" y="638.44" fill="#ffffff" textLength="9.69" lengthAdjust="spacingAndGlyphs">to</text>
<path d="M1189.51 624.24H1233.32V644.64H1189.51V637.84c0,-6.83 -5.46,5.46 -5.46,-5.12s5.46,1.71 5.46,-5.12v-3.4z" fill="#415e24" transform="translate(0.7 0.7)"/>
<path d="M1189.51 624.24H1233.32V644.64H1189.51V637.84c0,-6.83 -5.46,5.46 -5.46,-5.12s5.46,1.71 5.46,-5.12v-3.4z" fill="#77ab41"/>
<path d="M1232.92 624.64H1189.91" stroke="#a3c67e" stroke-width="1" fill="none"/>
<path d="M1189.91 637.84V644.24" stroke="#a3c67e" stroke-width="1" fill="none"/>
<path d="M1189.71 637.84c0,-6.83 -5.46,5.46 -5.46,-5.12" stroke="#a3c67e" stroke-width="0.7" fill="none" opacity=".8"/>
<rect x="1193.31" y="627.74" width="36.01" height="13.7" rx="2.7" fill="#c9ddb3"/>
<text x="1196.81" y="638.44" fill="#000000" textLength="22.11" lengthAdjust="spacingAndGlyphs">false</text>
<path d="M1221.02 633.34h5.1l-2.55 4.6z" fill="#77ab41"/>
<path d="M977.40 645.37H987.60l4.1,2.7 2,0 4.1,-2.7H1188.98V666.50H997.80l-4.1,2.7 -2,0 -4.1,-2.7H977.40z" fill="#153825" transform="translate(0.7 0.7)"/>
<path d="M977.40 645.37H987.60l4.1,2.7 2,0 4.1,-2.7H1188.98V666.50H997.80l-4.1,2.7 -2,0 -4.1,-2.7H977.40z" fill="#266643"/>
<path d="M1188.58 645.77H997.80l-4.1,2.7 -2,0 -4.1,-2.7H977.80V666.10" stroke="#6b977f" stroke-width="1" fill="none"/>
<text x="984.25" y="659.57" fill="#ffffff" textLength="14.06" lengthAdjust="spacingAndGlyphs">set</text>
<rect x="1003.80" y="648.87" width="92.54" height="13.7" rx="2.7" fill="#a8c2b4"/>
<text x="1007.30" y="659.57" fill="#000000" textLength="78.64" lengthAdjust="spacingAndGlyphs">CheckBox_Shoes</text>
<path d="M1088.04 654.47h5.1l-2.55 4.6z" fill="#266643"/>
<text x="1101.24" y="659.57" fill="#ffffff" textLength="2.69" lengthAdjust="spacingAndGlyphs">.</text>
<rect x="1106.24" y="648.87" width="54.04" height="13.7" rx="2.7" fill="#a8c2b4"/>
<text x="1109.74" y="659.57" fill="#000000" textLength="40.14" lengthAdjust="spacingAndGlyphs">Checked</text>
<path d="M1151.98 654.47h5.1l-2.55 4.6z" fill="#266643"/>
<text x="1166.78" y="659.57" fill="#ffffff" textLength="9.69" lengthAdjust="spacingAndGlyphs">to</text>
<path d="M1188.98 645.37H1232.79V665.77H1188.98V658.97c0,-6.83 -5.46,5.46 -5.46,-5.12s5.46,1.71 5.46,-5.12v-3.4z" fill="#415e24" transform="translate(0.7 0.7)"/>
<path d="M1188.98 645.37H1232.79V665.77H1188.98V658.97c0,-6.83 -5.46,5.46 -5.46,-5.12s5.46,1.71 5.46,-5.12v-3.4z" fill="#77ab41"/>
<path d="M1232.39 645.77H1189.38" stroke="#a3c67e" stroke-width="1" fill="none"/>
<path d="M1189.38 658.97V665.37" stroke="#a3c67e" stroke-width="1" fill="none"/>
<path d="M1189.18 658.97c0,-6.83 -5.46,5.46 -5.46,-5.12" stroke="#a3c67e" stroke-width="0.7" fill="none" opacity=".8"/>
<rect x="1192.78" y="648.87" width="36.01" height="13.7" rx="2.7" fill="#c9ddb3"/>
<text x="1196.28" y="659.57" fill="#000000" textLength="22.11" lengthAdjust="spacingAndGlyphs">false</text>
<path d="M1220.49 654.47h5.1l-2.55 4.6z" fill="#77ab41"/>
<path d="M977.40 666.50H987.60l4.1,2.7 2,0 4.1,-2.7H1224.25V687.63H997.80l-4.1,2.7 -2,0 -4.1,-2.7H977.40z" fill="#153825" transform="translate(0.7 0.7)"/>
<path d="M977.40 666.50H987.60l4.1,2.7 2,0 4.1,-2.7H1224.25V687.63H997.80l-4.1,2.7 -2,0 -4.1,-2.7H977.40z" fill="#266643"/>
<path d="M1223.85 666.90H997.80l-4.1,2.7 -2,0 -4.1,-2.7H977.80V687.23" stroke="#6b977f" stroke-width="1" fill="none"/>
<text x="984.25" y="680.70" fill="#ffffff" textLength="14.06" lengthAdjust="spacingAndGlyphs">set</text>
<rect x="1003.80" y="670.00" width="127.81" height="13.7" rx="2.7" fill="#a8c2b4"/>
<text x="1007.30" y="680.70" fill="#000000" textLength="113.91" lengthAdjust="spacingAndGlyphs">CheckBox_WarmClothes</text>
<path d="M1123.31 675.60h5.1l-2.55 4.6z" fill="#266643"/>
<text x="1136.51" y="680.70" fill="#ffffff" textLength="2.69" lengthAdjust="spacingAndGlyphs">.</text>
<rect x="1141.51" y="670.00" width="54.04" height="13.7" rx="2.7" fill="#a8c2b4"/>
<text x="1145.01" y="680.70" fill="#000000" textLength="40.14" lengthAdjust="spacingAndGlyphs">Checked</text>
<path d="M1187.25 675.60h5.1l-2.55 4.6z" fill="#266643"/>
<text x="1202.05" y="680.70" fill="#ffffff" textLength="9.69" lengthAdjust="spacingAndGlyphs">to</text>
<path d="M1224.25 666.50H1268.06V686.90H1224.25V680.10c0,-6.83 -5.46,5.46 -5.46,-5.12s5.46,1.71 5.46,-5.12v-3.4z" fill="#415e24" transform="translate(0.7 0.7)"/>
<path d="M1224.25 666.50H1268.06V686.90H1224.25V680.10c0,-6.83 -5.46,5.46 -5.46,-5.12s5.46,1.71 5.46,-5.12v-3.4z" fill="#77ab41"/>
<path d="M1267.66 666.90H1224.65" stroke="#a3c67e" stroke-width="1" fill="none"/>
<path d="M1224.65 680.10V686.50" stroke="#a3c67e" stroke-width="1" fill="none"/>
<path d="M1224.45 680.10c0,-6.83 -5.46,5.46 -5.46,-5.12" stroke="#a3c67e" stroke-width="0.7" fill="none" opacity=".8"/>
<rect x="1228.05" y="670.00" width="36.01" height="13.7" rx="2.7" fill="#c9ddb3"/>
<text x="1231.55" y="680.70" fill="#000000" textLength="22.11" lengthAdjust="spacingAndGlyphs">false</text>
<path d="M1255.76 675.60h5.1l-2.55 4.6z" fill="#77ab41"/>
<path d="M977.40 687.63H987.60l4.1,2.7 2,0 4.1,-2.7H1178.90V708.76H997.80l-4.1,2.7 -2,0 -4.1,-2.7H977.40z" fill="#153825" transform="translate(0.7 0.7)"/>
<path d="M977.40 687.63H987.60l4.1,2.7 2,0 4.1,-2.7H1178.90V708.76H997.80l-4.1,2.7 -2,0 -4.1,-2.7H977.40z" fill="#266643"/>
<path d="M1178.50 688.03H997.80l-4.1,2.7 -2,0 -4.1,-2.7H977.80V708.36" stroke="#6b977f" stroke-width="1" fill="none"/>
<text x="984.25" y="701.83" fill="#ffffff" textLength="14.06" lengthAdjust="spacingAndGlyphs">set</text>
<rect x="1003.80" y="691.13" width="82.46" height="13.7" rx="2.7" fill="#a8c2b4"/>
<text x="1007.30" y="701.83" fill="#000000" textLength="68.56" lengthAdjust="spacingAndGlyphs">CheckBox_Cap</text>
<path d="M1077.96 696.73h5.1l-2.55 4.6z" fill="#266643"/>
<text x="1091.16" y="701.83" fill="#ffffff" textLength="2.69" lengthAdjust="spacingAndGlyphs">.</text>
<rect x="1096.16" y="691.13" width="54.04" height="13.7" rx="2.7" fill="#a8c2b4"/>
<text x="1099.66" y="701.83" fill="#000000" textLength="40.14" lengthAdjust="spacingAndGlyphs">Checked</text>
<path d="M1141.90 696.73h5.1l-2.55 4.6z" fill="#266643"/>
<text x="1156.70" y="701.83" fill="#ffffff" textLength="9.69" lengthAdjust="spacingAndGlyphs">to</text>
<path d="M1178.90 687.63H1222.71V708.03H1178.90V701.23c0,-6.83 -5.46,5.46 -5.46,-5.12s5.46,1.71 5.46,-5.12v-3.4z" fill="#415e24" transform="translate(0.7 0.7)"/>
<path d="M1178.90 687.63H1222.71V708.03H1178.90V701.23c0,-6.83 -5.46,5.46 -5.46,-5.12s5.46,1.71 5.46,-5.12v-3.4z" fill="#77ab41"/>
<path d="M1222.31 688.03H1179.30" stroke="#a3c67e" stroke-width="1" fill="none"/>
<path d="M1179.30 701.23V707.63" stroke="#a3c67e" stroke-width="1" fill="none"/>
<path d="M1179.10 701.23c0,-6.83 -5.46,5.46 -5.46,-5.12" stroke="#a3c67e" stroke-width="0.7" fill="none" opacity=".8"/>
<rect x="1182.70" y="691.13" width="36.01" height="13.7" rx="2.7" fill="#c9ddb3"/>
<text x="1186.20" y="701.83" fill="#000000" textLength="22.11" lengthAdjust="spacingAndGlyphs">false</text>
<path d="M1210.41 696.73h5.1l-2.55 4.6z" fill="#77ab41"/>
<g transform="translate(1145 112) scale(0.1389)" stroke-linejoin="round" stroke-linecap="round">
<path d="M300,122 C300,48 400,48 416,116" fill="none" stroke="#565656" stroke-width="34"/><path d="M405,100 L628,205" fill="none" stroke="#565656" stroke-width="13"/><path d="M215,150 L300,95" fill="none" stroke="#565656" stroke-width="10"/>
<path d="M598,232 L640,212 C672,330 684,450 672,528 L618,578 L598,560 Z" fill="#565656" stroke="#565656" stroke-width="6"/>
<path d="M420,150 L470,140 L440,390 L415,390 Z" fill="#178f77"/>
<g stroke="#4b4545" stroke-width="10">
<path d="M55,228 L100,214 L93,190 L150,160 L166,181 L190,183 L186,160 L228,163 L238,388 L128,390 Z" fill="#d05f2d"/>
<path d="M245,150 L292,150 C284,134 280,120 300,112 L345,109 C366,118 361,135 352,150 L412,150 L418,390 L250,390 Z" fill="#49a6d4"/>
<path d="M472,140 L500,186 L535,178 L548,201 L576,196 L580,178 L622,195 L548,408 L430,390 Z" fill="#7c5385"/>
<path d="M105,392 L540,398 C578,400 602,420 602,470 L598,600 C560,636 400,646 250,626 C150,611 70,580 62,500 C58,450 78,400 105,392 Z" fill="#45b5aa"/>
<path d="M70,480 C125,605 400,592 535,420" fill="none"/>
<path d="M97,468 C145,572 388,566 512,412" fill="none"/>
<path d="M470,478 L468,560 L385,552" fill="none"/>
<path d="M542,402 C558,470 552,560 542,612" fill="none"/>
<path d="M160,602 C300,650 480,640 545,615" fill="none"/>
</g></g>
<g fill="none" stroke="#85858a" stroke-width="2.200" stroke-linejoin="round"><rect x="1216.3" y="420.2" width="18" height="18" rx="1.500"/><path d="M1220.5 429.5l4 3.800 7-7.500"/><path d="M1240 424v19.700h-10"/></g>
<g fill="none" stroke="#85858a" stroke-width="1.900"><circle cx="1228" cy="483.8" r="11.300"/><path d="M1228 467.500v5M1228 495.100v5M1211.700 483.800h5M1239.300 483.800h5"/><circle cx="1228" cy="483.800" r="4" fill="#85858a" stroke="none"/></g>
<g fill="none" stroke="#85858a" stroke-width="1.900"><circle cx="1227.600" cy="526" r="14.800"/><path d="M1220 526h15.200M1227.600 518.400v15.200" stroke-width="2"/><circle cx="1227.600" cy="560" r="14.800"/><path d="M1220 560h15.200" stroke-width="2"/></g>
<rect x="1266.5" y="367" width="9.300" height="168" rx="4.600" fill="#4b4b4b"/>
<rect x="747" y="680.300" width="289" height="8.600" rx="4.300" fill="#595959" opacity=".8"/>
<g fill="none" stroke="#85858a" stroke-width="1">
<path d="M311.500 596l9.500-9.800 9.500 9.800zM311.500 624l9.500 9.800 9.500-9.800z"/><path d="M378.500 596l9.500-9.800 9.500 9.800zM378.500 624l9.500 9.800 9.500-9.800z"/><path d="M311.500 596.300h19M311.500 623.700h19M378.500 596.300h19M378.500 623.700h19" stroke-width="1.600"/>
<rect x="295.500" y="636.800" width="120.500" height="19.700" stroke-width="1.300" fill="#202020"/></g>
<path d="M318.700 602.600l7.700 14.200h-15.400z" fill="#c9c442"/><path d="M318.700 607v5.600M318.700 614v1.600" stroke="#8c8c8c" stroke-width="1.500"/>
<circle cx="384" cy="610" r="7.600" fill="#c31a1a"/><path d="M380.100 606.100l7.800 7.800M387.900 606.100l-7.800 7.800" stroke="#d6d6d6" stroke-width="1.800"/>
<text x="331.500" y="616.200" font-size="13" fill="#9a9a9a">5</text><text x="396.500" y="616.200" font-size="13" fill="#9a9a9a">0</text>
<text x="304.700" y="652.200" font-size="14.500" fill="#9a9a9a" textLength="102.500" lengthAdjust="spacingAndGlyphs">Show Warnings</text>
</svg>
</main>
<footer id="footer">
<span class="t" style="left:406.80px;top:6.50px;font-size:13px;color:#a9a9a9;letter-spacing:0.058px;text-decoration:underline;">Privacy Policy and Terms of Use</span>
<span class="t" style="left:619.50px;top:6.50px;font-size:13px;color:#f0f0f0;letter-spacing:0.106px;">Accessibility:</span>
<span class="t" style="left:698.90px;top:6.50px;font-size:13px;color:#a9a9a9;letter-spacing:0.323px;text-decoration:underline;">accessibility.mit.edu</span>
</footer>
</body></html>
